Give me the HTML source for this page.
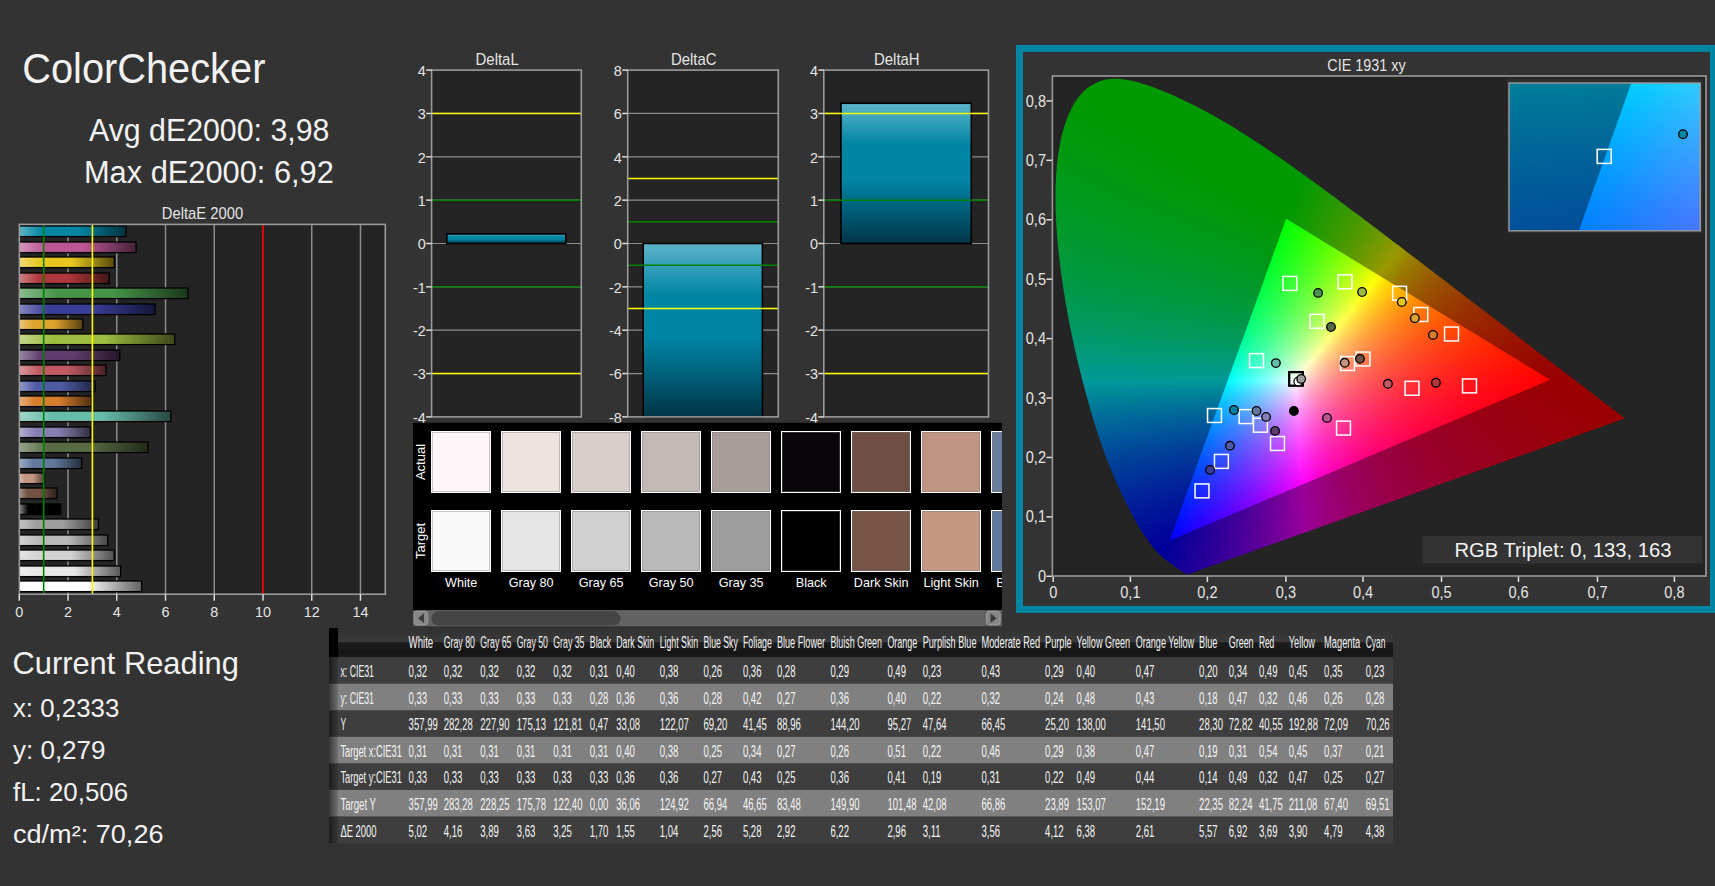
<!DOCTYPE html>
<html><head><meta charset="utf-8"><title>ColorChecker</title><style>html,body{margin:0;padding:0}body{width:1715px;height:886px;overflow:hidden;background:#333333;position:relative;font-family:"Liberation Sans",sans-serif}
.c{position:absolute;overflow:hidden}.c i{position:absolute;left:0;right:0;height:2px;display:block}
svg{position:absolute;left:0;top:0}svg text{font-family:"Liberation Sans",sans-serif}</style></head><body>
<div class="c" style="left:1052px;top:76px;width:654px;height:500px;background:#242424"></div>
<div class="c" style="left:1053px;top:76px;width:653px;height:500px;clip-path:polygon(135.59px 497.89px,134.9px 497.94px,134.44px 497.95px,134.05px 497.95px,133.72px 497.93px,133.42px 497.9px,133.16px 497.85px,132.93px 497.78px,132.72px 497.7px,132.54px 497.61px,132.38px 497.52px,132.24px 497.43px,132.11px 497.35px,131.98px 497.26px,131.82px 497.17px,131.65px 497.07px,131.46px 496.96px,131.26px 496.83px,131.04px 496.7px,130.8px 496.56px,130.56px 496.4px,130.3px 496.23px,130.03px 496.06px,129.75px 495.87px,129.46px 495.67px,129.16px 495.46px,128.85px 495.24px,128.54px 495.02px,128.21px 494.79px,127.87px 494.55px,127.51px 494.3px,127.14px 494.04px,126.75px 493.78px,126.34px 493.5px,125.91px 493.21px,125.45px 492.9px,124.96px 492.58px,124.44px 492.23px,123.9px 491.87px,123.33px 491.49px,122.73px 491.09px,122.11px 490.68px,121.47px 490.25px,120.81px 489.81px,120.12px 489.35px,119.41px 488.87px,118.67px 488.37px,117.9px 487.83px,117.1px 487.26px,116.27px 486.66px,115.4px 486.01px,114.5px 485.33px,113.57px 484.61px,112.61px 483.86px,111.64px 483.07px,110.63px 482.24px,109.6px 481.36px,108.52px 480.4px,107.4px 479.36px,106.22px 478.21px,104.98px 476.94px,103.67px 475.53px,102.29px 473.98px,100.83px 472.27px,99.32px 470.42px,97.73px 468.4px,96.08px 466.22px,94.37px 463.87px,92.59px 461.33px,90.75px 458.58px,88.83px 455.6px,86.85px 452.38px,84.78px 448.88px,82.65px 445.11px,80.43px 441.04px,78.11px 436.65px,75.7px 431.94px,73.18px 426.89px,70.55px 421.5px,67.81px 415.74px,64.96px 409.6px,62.03px 403.06px,59.04px 396.11px,56.02px 388.74px,52.98px 380.94px,49.95px 372.68px,46.92px 363.97px,43.9px 354.81px,40.89px 345.21px,37.88px 335.18px,34.88px 324.7px,31.88px 313.8px,28.92px 302.52px,26.01px 290.9px,23.18px 279px,20.46px 266.86px,17.86px 254.53px,15.41px 242.07px,13.13px 229.53px,11.03px 216.96px,9.13px 204.41px,7.44px 191.93px,5.97px 179.59px,4.74px 167.42px,3.76px 155.45px,3.05px 143.72px,2.62px 132.24px,2.47px 121.04px,2.63px 110.15px,3.1px 99.6px,3.9px 89.41px,5.02px 79.64px,6.48px 70.31px,8.27px 61.48px,10.42px 53.16px,12.91px 45.42px,15.73px 38.26px,18.87px 31.73px,22.3px 25.84px,26.01px 20.62px,29.98px 16.09px,34.18px 12.28px,38.6px 9.16px,43.2px 6.71px,47.96px 4.87px,52.85px 3.62px,57.84px 2.92px,62.92px 2.73px,68.06px 3px,73.25px 3.66px,78.49px 4.66px,83.76px 5.95px,89.05px 7.48px,94.35px 9.18px,99.66px 11.05px,104.94px 13.04px,110.2px 15.15px,115.41px 17.34px,120.57px 19.6px,125.66px 21.9px,130.68px 24.24px,135.64px 26.63px,140.56px 29.07px,145.43px 31.56px,150.27px 34.09px,155.07px 36.68px,159.85px 39.32px,164.61px 42.01px,169.35px 44.75px,174.08px 47.54px,178.8px 50.37px,183.5px 53.25px,188.21px 56.18px,192.9px 59.14px,197.58px 62.15px,202.26px 65.19px,206.93px 68.26px,211.58px 71.37px,216.22px 74.51px,220.86px 77.68px,225.49px 80.87px,230.12px 84.09px,234.74px 87.34px,239.36px 90.6px,243.98px 93.89px,248.59px 97.2px,253.22px 100.53px,257.84px 103.88px,262.47px 107.24px,267.1px 110.62px,271.74px 114.02px,276.37px 117.43px,281.01px 120.86px,285.64px 124.3px,290.27px 127.74px,294.89px 131.2px,299.5px 134.66px,304.11px 138.12px,308.72px 141.59px,313.32px 145.06px,317.92px 148.54px,322.52px 152.01px,327.11px 155.48px,331.7px 158.95px,336.28px 162.41px,340.85px 165.88px,345.41px 169.33px,349.94px 172.78px,354.46px 176.22px,358.97px 179.66px,363.45px 183.08px,367.91px 186.49px,372.35px 189.89px,376.77px 193.27px,381.17px 196.63px,385.55px 199.98px,389.9px 203.31px,394.23px 206.62px,398.52px 209.91px,402.79px 213.17px,407.02px 216.41px,411.22px 219.63px,415.38px 222.81px,419.51px 225.97px,423.6px 229.09px,427.65px 232.18px,431.66px 235.23px,435.62px 238.25px,439.53px 241.23px,443.4px 244.17px,447.21px 247.09px,450.96px 249.96px,454.66px 252.8px,458.29px 255.58px,461.85px 258.31px,465.32px 260.99px,468.72px 263.59px,472.02px 266.12px,475.24px 268.58px,478.39px 270.99px,481.46px 273.33px,484.47px 275.63px,487.43px 277.89px,490.33px 280.11px,493.18px 282.28px,495.97px 284.41px,498.69px 286.49px,501.33px 288.51px,503.89px 290.46px,506.37px 292.34px,508.76px 294.15px,511.07px 295.91px,513.31px 297.6px,515.47px 299.24px,517.56px 300.83px,519.58px 302.37px,521.53px 303.86px,523.41px 305.3px,525.23px 306.7px,526.98px 308.05px,528.66px 309.35px,530.28px 310.6px,531.84px 311.79px,533.34px 312.95px,534.79px 314.05px,536.18px 315.12px,537.51px 316.14px,538.8px 317.12px,540.05px 318.06px,541.24px 318.97px,542.4px 319.84px,543.51px 320.69px,544.58px 321.5px,545.61px 322.29px,546.6px 323.04px,547.56px 323.78px,548.48px 324.49px,549.38px 325.18px,550.25px 325.85px,551.1px 326.5px,551.92px 327.13px,552.72px 327.75px,553.5px 328.35px,554.26px 328.92px,554.99px 329.49px,555.69px 330.03px,556.37px 330.55px,557.03px 331.06px,557.66px 331.54px,558.28px 332.01px,558.87px 332.46px,559.44px 332.89px,559.99px 333.3px,560.51px 333.7px,561.02px 334.07px,561.51px 334.44px,561.97px 334.78px,562.41px 335.12px,562.83px 335.44px,563.22px 335.74px,563.6px 336.03px,563.96px 336.31px,564.31px 336.58px,564.64px 336.83px,564.95px 337.07px,565.25px 337.31px,565.55px 337.53px,565.82px 337.74px,566.09px 337.94px,566.34px 338.14px,566.59px 338.32px,566.81px 338.5px,567.03px 338.66px,567.23px 338.82px,567.41px 338.96px,567.58px 339.09px,567.73px 339.21px,567.88px 339.32px,568.01px 339.42px,568.14px 339.52px,568.26px 339.61px,568.39px 339.71px,568.51px 339.8px,568.63px 339.89px,568.75px 339.98px,568.86px 340.07px,568.96px 340.15px,569.06px 340.23px,569.16px 340.3px,569.25px 340.37px,569.33px 340.43px,569.42px 340.5px,569.51px 340.57px,569.6px 340.64px,569.69px 340.71px,569.78px 340.78px,569.87px 340.85px,569.96px 340.92px,570.05px 340.98px,570.14px 341.05px,570.22px 341.11px,570.3px 341.18px,570.38px 341.23px,570.45px 341.29px,570.52px 341.34px,570.58px 341.39px,570.64px 341.43px,570.69px 341.48px,570.74px 341.51px,570.79px 341.55px,570.83px 341.58px,570.86px 341.61px,570.89px 341.63px,570.92px 341.65px,570.94px 341.67px,570.96px 341.68px,570.98px 341.7px,571px 341.71px,571.01px 341.72px,571.02px 341.73px,571.04px 341.74px,571.05px 341.75px,570.9px 342.8px)">
<i style="top:2px;background:linear-gradient(90deg,#090 49px,#090 78px)"></i>
<i style="top:4px;background:linear-gradient(90deg,#090 43px,#090 86px)"></i>
<i style="top:6px;background:linear-gradient(90deg,#090 38px,#090 93px)"></i>
<i style="top:8px;background:linear-gradient(90deg,#090 35px,#090 99px)"></i>
<i style="top:10px;background:linear-gradient(90deg,#090 32px,#090 105px)"></i>
<i style="top:12px;background:linear-gradient(90deg,#090 30px,#090 110px)"></i>
<i style="top:14px;background:linear-gradient(90deg,#090 28px,#090 115px)"></i>
<i style="top:16px;background:linear-gradient(90deg,#090 26px,#090 119px)"></i>
<i style="top:18px;background:linear-gradient(90deg,#009901 24px,#090 124px)"></i>
<i style="top:20px;background:linear-gradient(90deg,#009901 23px,#090 119px,#090 128px)"></i>
<i style="top:22px;background:linear-gradient(90deg,#009902 21px,#090 59px,#090 133px)"></i>
<i style="top:24px;background:linear-gradient(90deg,#009903 20px,#090 56px,#090 137px)"></i>
<i style="top:26px;background:linear-gradient(90deg,#009903 19px,#090 57px,#090 141px)"></i>
<i style="top:28px;background:linear-gradient(90deg,#009904 17px,#090 59px,#090 145px)"></i>
<i style="top:30px;background:linear-gradient(90deg,#009905 16px,#090 62px,#090 149px)"></i>
<i style="top:32px;background:linear-gradient(90deg,#009905 15px,#090 64px,#090 153px)"></i>
<i style="top:34px;background:linear-gradient(90deg,#009906 14px,#090 67px,#090 156px)"></i>
<i style="top:36px;background:linear-gradient(90deg,#009906 13px,#090 70px,#090 160px)"></i>
<i style="top:38px;background:linear-gradient(90deg,#009907 13px,#090 73px,#090 164px)"></i>
<i style="top:40px;background:linear-gradient(90deg,#009907 12px,#090 76px,#090 167px)"></i>
<i style="top:42px;background:linear-gradient(90deg,#009908 11px,#090 79px,#090 171px)"></i>
<i style="top:44px;background:linear-gradient(90deg,#009909 10px,#090 82px,#090 174px)"></i>
<i style="top:46px;background:linear-gradient(90deg,#009909 10px,#090 85px,#090 177px)"></i>
<i style="top:48px;background:linear-gradient(90deg,#00990a 9px,#090 89px,#090 181px)"></i>
<i style="top:50px;background:linear-gradient(90deg,#00990a 8px,#090 92px,#090 184px)"></i>
<i style="top:52px;background:linear-gradient(90deg,#00990b 8px,#090 95px,#090 187px)"></i>
<i style="top:54px;background:linear-gradient(90deg,#00990c 7px,#090 98px,#090 190px)"></i>
<i style="top:56px;background:linear-gradient(90deg,#00990c 7px,#090 101px,#090 194px)"></i>
<i style="top:58px;background:linear-gradient(90deg,#00990d 6px,#090 105px,#090 197px)"></i>
<i style="top:60px;background:linear-gradient(90deg,#00990d 6px,#090 108px,#090 200px)"></i>
<i style="top:62px;background:linear-gradient(90deg,#00990e 5px,#090 111px,#090 203px)"></i>
<i style="top:64px;background:linear-gradient(90deg,#00990e 5px,#090 114px,#090 206px)"></i>
<i style="top:66px;background:linear-gradient(90deg,#00990f 4px,#090 117px,#090 209px)"></i>
<i style="top:68px;background:linear-gradient(90deg,#009910 4px,#090 120px,#090 212px)"></i>
<i style="top:70px;background:linear-gradient(90deg,#009910 4px,#090 124px,#090 215px)"></i>
<i style="top:72px;background:linear-gradient(90deg,#091 3px,#090 127px,#090 218px)"></i>
<i style="top:74px;background:linear-gradient(90deg,#091 3px,#090 130px,#090 221px)"></i>
<i style="top:76px;background:linear-gradient(90deg,#009912 3px,#090 133px,#090 224px)"></i>
<i style="top:78px;background:linear-gradient(90deg,#009913 2px,#090 137px,#090 227px)"></i>
<i style="top:80px;background:linear-gradient(90deg,#009913 2px,#090 140px,#090 230px)"></i>
<i style="top:82px;background:linear-gradient(90deg,#009914 2px,#090 143px,#090 232px)"></i>
<i style="top:84px;background:linear-gradient(90deg,#009914 2px,#090 146px,#090 235px)"></i>
<i style="top:86px;background:linear-gradient(90deg,#009915 2px,#090 150px,#090 238px)"></i>
<i style="top:88px;background:linear-gradient(90deg,#009916 1px,#090 153px,#090 241px)"></i>
<i style="top:90px;background:linear-gradient(90deg,#009916 1px,#090 156px,#090 244px)"></i>
<i style="top:92px;background:linear-gradient(90deg,#009917 1px,#090 159px,#090 247px)"></i>
<i style="top:94px;background:linear-gradient(90deg,#009918 1px,#090 163px,#090 249px)"></i>
<i style="top:96px;background:linear-gradient(90deg,#009918 1px,#090 166px,#019900 251px,#029900 252px)"></i>
<i style="top:98px;background:linear-gradient(90deg,#009919 1px,#090 169px,#019900 250px,#059900 255px)"></i>
<i style="top:100px;background:linear-gradient(90deg,#00991a 0,#090 172px,#019900 249px,#089900 258px)"></i>
<i style="top:102px;background:linear-gradient(90deg,#00991a 0,#009901 165px,#019900 249px,#0b9900 261px)"></i>
<i style="top:104px;background:linear-gradient(90deg,#00991b 0,#009901 165px,#019900 248px,#0d9900 263px)"></i>
<i style="top:106px;background:linear-gradient(90deg,#00991b 0,#009902 164px,#090 192px,#019900 247px,#109900 266px)"></i>
<i style="top:108px;background:linear-gradient(90deg,#00991c 0,#009903 164px,#090 189px,#090 246px,#139900 269px)"></i>
<i style="top:110px;background:linear-gradient(90deg,#00991d 0,#009903 163px,#090 190px,#019900 246px,#169900 271px)"></i>
<i style="top:112px;background:linear-gradient(90deg,#00991d 0,#009904 163px,#090 193px,#019900 245px,#199900 274px)"></i>
<i style="top:114px;background:linear-gradient(90deg,#00991e 0,#009905 162px,#090 195px,#019900 244px,#1d9900 277px)"></i>
<i style="top:116px;background:linear-gradient(90deg,#00991f 0,#009906 162px,#090 198px,#019900 244px,#209900 280px)"></i>
<i style="top:118px;background:linear-gradient(90deg,#00991f 0,#009906 162px,#090 201px,#019900 243px,#239900 282px)"></i>
<i style="top:120px;background:linear-gradient(90deg,#009920 0,#009907 161px,#090 204px,#019900 242px,#279900 285px)"></i>
<i style="top:122px;background:linear-gradient(90deg,#009921 0,#009908 161px,#090 207px,#019900 241px,#2a9900 288px)"></i>
<i style="top:124px;background:linear-gradient(90deg,#092 0,#009909 160px,#090 210px,#019900 241px,#2d9900 290px)"></i>
<i style="top:126px;background:linear-gradient(90deg,#092 0,#009909 160px,#090 214px,#019900 240px,#319900 293px)"></i>
<i style="top:128px;background:linear-gradient(90deg,#009923 0,#00990a 160px,#090 217px,#019900 239px,#359900 296px)"></i>
<i style="top:130px;background:linear-gradient(90deg,#009924 0,#00990b 159px,#090 220px,#019900 239px,#369900 296px,#389900 298px)"></i>
<i style="top:132px;background:linear-gradient(90deg,#009925 0,#00990c 159px,#090 223px,#019900 238px,#369900 295px,#3d9900 301px)"></i>
<i style="top:134px;background:linear-gradient(90deg,#009925 0,#00990d 158px,#090 226px,#019900 237px,#369900 293px,#419900 304px)"></i>
<i style="top:136px;background:linear-gradient(90deg,#009926 0,#00990e 158px,#090 230px,#029900 237px,#379900 293px,#490 306px)"></i>
<i style="top:138px;background:linear-gradient(90deg,#009927 0,#00990e 158px,#090 233px,#0d9900 249px,#429900 303px,#499900 309px)"></i>
<i style="top:140px;background:linear-gradient(90deg,#009928 0,#00990f 157px,#019900 235px,#369900 290px,#4e9900 312px)"></i>
<i style="top:142px;background:linear-gradient(90deg,#009928 0,#009910 157px,#019900 234px,#369900 289px,#519900 314px)"></i>
<i style="top:144px;background:linear-gradient(90deg,#009929 1px,#091 157px,#019901 233px,#369900 288px,#569900 317px)"></i>
<i style="top:146px;background:linear-gradient(90deg,#00992a 1px,#009912 157px,#019902 233px,#189900 257px,#4d9900 308px,#5b9900 320px)"></i>
<i style="top:148px;background:linear-gradient(90deg,#00992b 1px,#009913 156px,#019903 232px,#149900 252px,#499900 303px,#5f9900 322px)"></i>
<i style="top:150px;background:linear-gradient(90deg,#00992b 1px,#009914 156px,#019904 231px,#169900 254px,#4d9900 305px,#659900 325px)"></i>
<i style="top:152px;background:linear-gradient(90deg,#00992c 1px,#009914 156px,#009905 230px,#199900 256px,#4f9900 306px,#6a9900 328px)"></i>
<i style="top:154px;background:linear-gradient(90deg,#00992d 1px,#009915 155px,#019906 230px,#1d9900 259px,#539900 308px,#6e9900 330px)"></i>
<i style="top:156px;background:linear-gradient(90deg,#00992e 1px,#009916 155px,#019907 229px,#219900 262px,#579900 310px,#749900 333px)"></i>
<i style="top:158px;background:linear-gradient(90deg,#00992f 1px,#009917 155px,#019908 228px,#259900 265px,#5c9900 313px,#7a9900 336px)"></i>
<i style="top:160px;background:linear-gradient(90deg,#009930 2px,#009918 155px,#009909 227px,#299900 268px,#609900 315px,#7f9900 338px)"></i>
<i style="top:162px;background:linear-gradient(90deg,#009930 2px,#009919 155px,#01990a 227px,#2e9900 271px,#659900 317px,#859900 341px)"></i>
<i style="top:164px;background:linear-gradient(90deg,#009931 2px,#00991a 155px,#01990b 226px,#390 275px,#6a9900 320px,#8c9900 344px)"></i>
<i style="top:166px;background:linear-gradient(90deg,#009932 2px,#00991b 154px,#01990c 225px,#389900 278px,#6f9900 322px,#919900 346px)"></i>
<i style="top:168px;background:linear-gradient(90deg,#093 2px,#00991c 154px,#00990d 224px,#3d9900 281px,#739900 324px,#989900 349px)"></i>
<i style="top:170px;background:linear-gradient(90deg,#009934 3px,#00991d 154px,#01990e 224px,#429900 284px,#7a9900 327px,#990 348px,#999500 351px)"></i>
<i style="top:172px;background:linear-gradient(90deg,#009935 3px,#00991e 154px,#019910 223px,#479900 287px,#7f9900 329px,#999800 347px,#998e00 354px)"></i>
<i style="top:174px;background:linear-gradient(90deg,#009936 3px,#00991f 154px,#091 222px,#4c9900 290px,#849900 331px,#990 345px,#980 357px)"></i>
<i style="top:176px;background:linear-gradient(90deg,#009937 3px,#009920 154px,#019912 222px,#519900 293px,#899900 333px,#999800 344px,#998300 359px)"></i>
<i style="top:178px;background:linear-gradient(90deg,#009938 3px,#009921 153px,#019913 221px,#579900 296px,#8e9900 335px,#990 342px,#997d00 362px)"></i>
<i style="top:180px;background:linear-gradient(90deg,#009938 4px,#092 154px,#019914 220px,#5c9900 299px,#959900 338px,#999800 341px,#997b00 362px,#997800 365px)"></i>
<i style="top:182px;background:linear-gradient(90deg,#009939 4px,#009923 153px,#009916 219px,#619900 301px,#999800 339px,#997c00 360px,#997400 367px)"></i>
<i style="top:184px;background:linear-gradient(90deg,#00993a 4px,#009924 153px,#019917 219px,#679900 304px,#990 337px,#997c00 358px,#996f00 370px)"></i>
<i style="top:186px;background:linear-gradient(90deg,#00993b 4px,#009925 153px,#019918 218px,#6d9900 307px,#999800 336px,#997b00 357px,#996b00 372px)"></i>
<i style="top:188px;background:linear-gradient(90deg,#00993c 4px,#009926 153px,#019919 217px,#749900 310px,#990 334px,#997d00 354px,#996700 375px)"></i>
<i style="top:190px;background:linear-gradient(90deg,#00993d 5px,#009928 153px,#00991b 216px,#799900 312px,#999800 333px,#997c00 353px,#996200 378px)"></i>
<i style="top:192px;background:linear-gradient(90deg,#00993e 5px,#009929 153px,#01991c 216px,#819900 316px,#990 331px,#997c00 351px,#996200 377px,#995f00 380px)"></i>
<i style="top:194px;background:linear-gradient(90deg,#00993f 5px,#00992a 153px,#01991d 215px,#890 319px,#990 329px,#997b00 350px,#996100 376px,#995b00 383px)"></i>
<i style="top:196px;background:linear-gradient(90deg,#009941 5px,#00992b 153px,#00991f 214px,#61990a 288px,#909900 322px,#999800 328px,#997c00 348px,#996100 374px,#995800 385px)"></i>
<i style="top:198px;background:linear-gradient(90deg,#009942 6px,#00992c 153px,#009920 213px,#359915 253px,#969900 324px,#999700 327px,#997b00 347px,#996000 373px,#995400 388px)"></i>
<i style="top:200px;background:linear-gradient(90deg,#009943 6px,#00992d 153px,#019921 213px,#999801 325px,#997b00 345px,#996000 371px,#995100 391px)"></i>
<i style="top:202px;background:linear-gradient(90deg,#094 6px,#00992f 153px,#019923 212px,#999001 328px,#997400 349px,#995a00 376px,#994e00 393px)"></i>
<i style="top:204px;background:linear-gradient(90deg,#009945 7px,#009930 154px,#009924 211px,#998901 331px,#996e00 353px,#995400 382px,#994b00 396px)"></i>
<i style="top:206px;background:linear-gradient(90deg,#009946 7px,#009931 154px,#019926 211px,#998101 335px,#996700 358px,#994e00 389px,#994800 399px)"></i>
<i style="top:208px;background:linear-gradient(90deg,#009947 7px,#009932 153px,#019927 210px,#997a01 339px,#995f00 364px,#994700 397px,#994500 401px)"></i>
<i style="top:210px;background:linear-gradient(90deg,#009948 7px,#009934 153px,#019929 209px,#27911f 242px,#997401 342px,#995a00 368px,#994300 403px,#994200 404px)"></i>
<i style="top:212px;background:linear-gradient(90deg,#009949 8px,#009935 154px,#00992a 208px,#179425 228px,#996f01 345px,#950 373px,#994000 406px)"></i>
<i style="top:214px;background:linear-gradient(90deg,#00994b 8px,#009936 154px,#01992c 208px,#1f9124 235px,#996801 349px,#995000 378px,#993d00 409px)"></i>
<i style="top:216px;background:linear-gradient(90deg,#00994c 8px,#009938 154px,#01992d 207px,#159328 226px,#996301 352px,#994b00 383px,#993a00 412px)"></i>
<i style="top:218px;background:linear-gradient(90deg,#00994d 9px,#009939 155px,#00992f 206px,#0d962c 218px,#995f01 355px,#994700 387px,#993800 414px)"></i>
<i style="top:220px;background:linear-gradient(90deg,#00994e 9px,#00993a 155px,#009931 205px,#0c962e 216px,#995a01 359px,#994200 393px,#993600 417px)"></i>
<i style="top:222px;background:linear-gradient(90deg,#00994f 9px,#00993c 155px,#019932 205px,#0e952f 217px,#995501 362px,#993e00 397px,#993400 419px)"></i>
<i style="top:224px;background:linear-gradient(90deg,#009951 10px,#00993d 156px,#019934 204px,#0b9731 214px,#995101 365px,#993b00 402px,#993100 422px)"></i>
<i style="top:226px;background:linear-gradient(90deg,#009952 10px,#00993e 156px,#009936 203px,#0b9733 213px,#994e01 368px,#993700 406px,#992f00 425px)"></i>
<i style="top:228px;background:linear-gradient(90deg,#009953 10px,#009940 156px,#009937 202px,#0a9735 211px,#994901 372px,#993400 412px,#992d00 427px)"></i>
<i style="top:230px;background:linear-gradient(90deg,#095 11px,#009941 157px,#019939 202px,#0b9636 212px,#994601 375px,#993000 417px,#992b00 430px)"></i>
<i style="top:232px;background:linear-gradient(90deg,#009956 11px,#009943 157px,#01993b 201px,#0a9739 210px,#994301 378px,#992d00 422px,#992900 433px)"></i>
<i style="top:234px;background:linear-gradient(90deg,#009957 11px,#009945 157px,#00993d 200px,#0a973a 209px,#993f01 382px,#992a00 428px,#992800 435px)"></i>
<i style="top:236px;background:linear-gradient(90deg,#009959 12px,#009946 158px,#01993f 200px,#0a963c 209px,#993c01 385px,#992700 433px,#992600 438px)"></i>
<i style="top:238px;background:linear-gradient(90deg,#00995a 12px,#009948 158px,#019941 199px,#0a963e 208px,#993901 388px,#992500 437px,#992400 440px)"></i>
<i style="top:240px;background:linear-gradient(90deg,#00995b 13px,#009949 159px,#009942 198px,#0a9740 207px,#993601 391px,#920 442px,#920 443px)"></i>
<i style="top:242px;background:linear-gradient(90deg,#00995d 13px,#00994b 160px,#009945 197px,#0a9742 206px,#993301 395px,#992000 446px)"></i>
<i style="top:244px;background:linear-gradient(90deg,#00995e 13px,#00994d 160px,#019946 197px,#099744 205px,#993101 398px,#991f00 448px)"></i>
<i style="top:246px;background:linear-gradient(90deg,#009960 14px,#00994e 161px,#019948 196px,#0a9746 204px,#992e01 401px,#991d00 451px)"></i>
<i style="top:248px;background:linear-gradient(90deg,#009961 14px,#009950 162px,#00994b 195px,#099749 203px,#992c00 405px,#991c00 454px)"></i>
<i style="top:250px;background:linear-gradient(90deg,#009963 14px,#009952 162px,#00994d 194px,#09974b 202px,#992901 408px,#991a00 456px)"></i>
<i style="top:252px;background:linear-gradient(90deg,#009964 15px,#009954 164px,#01994f 194px,#08974d 201px,#992701 411px,#991900 459px)"></i>
<i style="top:254px;background:linear-gradient(90deg,#096 15px,#095 165px,#019951 193px,#09984f 200px,#992501 414px,#991700 461px)"></i>
<i style="top:256px;background:linear-gradient(90deg,#009968 16px,#009957 166px,#009953 192px,#089852 199px,#992300 418px,#991600 464px)"></i>
<i style="top:258px;background:linear-gradient(90deg,#009969 16px,#009959 167px,#019956 192px,#089854 198px,#992101 421px,#991400 467px)"></i>
<i style="top:260px;background:linear-gradient(90deg,#00996b 17px,#00995b 169px,#019958 191px,#099856 198px,#991f01 424px,#991300 469px)"></i>
<i style="top:262px;background:linear-gradient(90deg,#00996d 17px,#00995d 170px,#00995a 190px,#099859 197px,#991d00 428px,#991200 472px)"></i>
<i style="top:264px;background:linear-gradient(90deg,#00996e 17px,#00995f 171px,#00995d 189px,#09985b 196px,#991b00 431px,#910 474px)"></i>
<i style="top:266px;background:linear-gradient(90deg,#009970 18px,#009961 173px,#01995f 189px,#08985e 195px,#991900 434px,#990f00 477px)"></i>
<i style="top:268px;background:linear-gradient(90deg,#009972 18px,#009963 175px,#019962 188px,#099861 194px,#991700 438px,#990e00 480px)"></i>
<i style="top:270px;background:linear-gradient(90deg,#009974 19px,#096 177px,#009964 187px,#089863 193px,#991500 442px,#990d00 482px)"></i>
<i style="top:272px;background:linear-gradient(90deg,#009976 19px,#009968 179px,#009967 186px,#089866 192px,#991400 445px,#990c00 485px)"></i>
<i style="top:274px;background:linear-gradient(90deg,#009978 20px,#00996a 182px,#01996a 186px,#089869 191px,#991200 448px,#990b00 487px)"></i>
<i style="top:276px;background:linear-gradient(90deg,#00997a 20px,#01996c 185px,#09986b 191px,#910 452px,#990a00 490px)"></i>
<i style="top:278px;background:linear-gradient(90deg,#00997c 20px,#00996f 184px,#08986e 190px,#990f00 455px,#990800 493px)"></i>
<i style="top:280px;background:linear-gradient(90deg,#00997e 21px,#009972 183px,#089871 189px,#990e00 458px,#990700 495px)"></i>
<i style="top:282px;background:linear-gradient(90deg,#009980 21px,#019975 183px,#099874 189px,#990d00 461px,#990600 498px)"></i>
<i style="top:284px;background:linear-gradient(90deg,#009982 22px,#019978 182px,#099877 188px,#990b00 465px,#990500 501px)"></i>
<i style="top:286px;background:linear-gradient(90deg,#009984 22px,#00997b 181px,#09987a 187px,#990a00 468px,#990400 503px)"></i>
<i style="top:288px;background:linear-gradient(90deg,#009986 23px,#00997e 180px,#08987d 186px,#990900 471px,#990300 506px)"></i>
<i style="top:290px;background:linear-gradient(90deg,#098 23px,#019981 180px,#0a9881 186px,#990700 474px,#990200 508px)"></i>
<i style="top:292px;background:linear-gradient(90deg,#00998b 24px,#009985 179px,#099884 185px,#990600 478px,#990100 511px)"></i>
<i style="top:294px;background:linear-gradient(90deg,#00998d 24px,#098 178px,#099987 184px,#990500 481px,#900 514px)"></i>
<i style="top:296px;background:linear-gradient(90deg,#00998f 25px,#01998b 178px,#08998b 183px,#990400 484px,#900 516px)"></i>
<i style="top:298px;background:linear-gradient(90deg,#009992 25px,#01998f 177px,#0a998e 183px,#990300 488px,#900 519px)"></i>
<i style="top:300px;background:linear-gradient(90deg,#009994 26px,#009993 176px,#099992 182px,#990200 491px,#900 522px)"></i>
<i style="top:302px;background:linear-gradient(90deg,#009997 26px,#009996 175px,#099996 181px,#990100 494px,#900 524px)"></i>
<i style="top:304px;background:linear-gradient(90deg,#099 27px,#019899 175px,#0a9799 181px,#990001 493px,#900 527px)"></i>
<i style="top:306px;background:linear-gradient(90deg,#009699 27px,#009499 174px,#0a9499 180px,#990002 488px,#900 528px,#900 529px)"></i>
<i style="top:308px;background:linear-gradient(90deg,#009499 28px,#009199 173px,#099099 179px,#990003 483px,#900 521px,#900 532px)"></i>
<i style="top:310px;background:linear-gradient(90deg,#009199 28px,#008d99 172px,#098c99 178px,#990004 479px,#900 522px,#900 535px)"></i>
<i style="top:312px;background:linear-gradient(90deg,#008f99 29px,#018a99 172px,#0a8999 178px,#990005 474px,#900 524px,#900 537px)"></i>
<i style="top:314px;background:linear-gradient(90deg,#008c99 29px,#008699 171px,#098598 177px,#990006 469px,#900 526px,#900 540px)"></i>
<i style="top:316px;background:linear-gradient(90deg,#008a99 30px,#008399 170px,#098298 176px,#990008 465px,#900 529px,#900 542px)"></i>
<i style="top:318px;background:linear-gradient(90deg,#008799 31px,#018099 170px,#0a7f98 176px,#990009 460px,#900 531px,#900 545px)"></i>
<i style="top:320px;background:linear-gradient(90deg,#008599 31px,#017c99 169px,#097c98 175px,#99000a 455px,#900 534px,#900 548px)"></i>
<i style="top:322px;background:linear-gradient(90deg,#008299 32px,#007999 168px,#097898 174px,#99000b 450px,#900 535px,#900 550px)"></i>
<i style="top:324px;background:linear-gradient(90deg,#008099 32px,#007699 167px,#087598 173px,#99000d 446px,#900 537px,#900 553px)"></i>
<i style="top:326px;background:linear-gradient(90deg,#007e99 33px,#017399 167px,#097298 173px,#99000e 441px,#900 537px,#900 556px)"></i>
<i style="top:328px;background:linear-gradient(90deg,#007b99 33px,#007099 166px,#096f98 172px,#990010 436px,#900 536px,#900 558px)"></i>
<i style="top:330px;background:linear-gradient(90deg,#007999 34px,#006e99 165px,#086d98 171px,#901 431px,#990002 527px,#900 561px)"></i>
<i style="top:332px;background:linear-gradient(90deg,#079 34px,#016b99 165px,#086a98 170px,#990012 427px,#990003 521px,#900 563px)"></i>
<i style="top:334px;background:linear-gradient(90deg,#007599 35px,#016899 164px,#096798 170px,#990014 422px,#990004 513px,#900 563px,#900 566px)"></i>
<i style="top:336px;background:linear-gradient(90deg,#007299 36px,#006599 163px,#086498 169px,#990016 417px,#990006 505px,#900 564px,#900 569px)"></i>
<i style="top:338px;background:linear-gradient(90deg,#007099 36px,#006399 162px,#086198 169px,#990017 412px,#990007 497px,#900 566px,#900 571px)"></i>
<i style="top:340px;background:linear-gradient(90deg,#006e99 37px,#016099 162px,#095f98 168px,#990019 407px,#990009 489px,#900 569px,#900 574px)"></i>
<i style="top:342px;background:linear-gradient(90deg,#006c99 37px,#005e99 161px,#095c98 168px,#99001b 402px,#99000a 481px,#900 570px,#900 574px)"></i>
<i style="top:344px;background:linear-gradient(90deg,#006a99 38px,#005b99 160px,#085a98 167px,#99001d 397px,#99000c 473px,#900 570px)"></i>
<i style="top:346px;background:linear-gradient(90deg,#006899 39px,#015999 160px,#085798 166px,#99001f 393px,#99000d 467px,#900 564px)"></i>
<i style="top:348px;background:linear-gradient(90deg,#069 39px,#015699 159px,#095598 166px,#990021 388px,#99000f 460px,#990001 559px)"></i>
<i style="top:350px;background:linear-gradient(90deg,#006499 40px,#005499 158px,#095398 165px,#990023 383px,#901 452px,#990002 553px)"></i>
<i style="top:352px;background:linear-gradient(90deg,#006299 41px,#005299 157px,#085098 164px,#990025 378px,#990013 444px,#990003 546px,#990003 548px)"></i>
<i style="top:354px;background:linear-gradient(90deg,#006099 41px,#015099 157px,#084e97 164px,#990027 374px,#990015 438px,#990005 536px,#990004 542px)"></i>
<i style="top:356px;background:linear-gradient(90deg,#005e99 42px,#014d99 156px,#094c98 163px,#990029 369px,#990017 431px,#990007 525px,#990005 536px)"></i>
<i style="top:358px;background:linear-gradient(90deg,#005c99 42px,#004b99 155px,#094997 163px,#99002c 364px,#990019 424px,#990008 514px,#990006 531px)"></i>
<i style="top:360px;background:linear-gradient(90deg,#005a99 43px,#014999 155px,#094797 163px,#99012e 359px,#99001b 416px,#99000b 502px,#990007 525px)"></i>
<i style="top:362px;background:linear-gradient(90deg,#005899 44px,#014799 154px,#0a4597 162px,#990031 355px,#99001d 411px,#99000c 494px,#990008 520px)"></i>
<i style="top:364px;background:linear-gradient(90deg,#005699 44px,#004599 153px,#0a4397 162px,#903 350px,#990020 404px,#99000e 483px,#99000a 514px)"></i>
<i style="top:366px;background:linear-gradient(90deg,#005499 45px,#004399 152px,#0a4197 161px,#990136 345px,#902 396px,#901 471px,#99000b 508px)"></i>
<i style="top:368px;background:linear-gradient(90deg,#005299 46px,#014199 152px,#0a3f96 161px,#990039 341px,#990024 391px,#990012 464px,#99000c 503px)"></i>
<i style="top:370px;background:linear-gradient(90deg,#005099 47px,#013f99 151px,#0a3d97 160px,#99003c 336px,#990027 384px,#990015 453px,#99000d 497px)"></i>
<i style="top:372px;background:linear-gradient(90deg,#004e99 47px,#003d99 150px,#0a3b97 159px,#99013f 331px,#99002a 377px,#990017 443px,#99000e 491px)"></i>
<i style="top:374px;background:linear-gradient(90deg,#004c99 48px,#013b99 150px,#0a3996 159px,#990143 326px,#99002d 370px,#99001a 433px,#990010 486px)"></i>
<i style="top:376px;background:linear-gradient(90deg,#004b99 49px,#013a99 149px,#0a3797 158px,#990046 322px,#990030 364px,#99001d 424px,#901 480px)"></i>
<i style="top:378px;background:linear-gradient(90deg,#004999 49px,#003899 148px,#0a3597 157px,#99014a 317px,#990034 357px,#990020 414px,#990012 475px)"></i>
<i style="top:380px;background:linear-gradient(90deg,#004799 50px,#003699 147px,#0b3397 157px,#99014d 312px,#990037 351px,#990023 405px,#990014 469px)"></i>
<i style="top:382px;background:linear-gradient(90deg,#004599 51px,#013499 147px,#0c3196 158px,#990152 307px,#99003b 344px,#990026 395px,#990015 463px)"></i>
<i style="top:384px;background:linear-gradient(90deg,#004399 52px,#013399 146px,#0b3097 156px,#905 303px,#99003e 338px,#990029 387px,#990017 457px,#990017 458px)"></i>
<i style="top:386px;background:linear-gradient(90deg,#004299 52px,#003199 145px,#0c2e96 156px,#99015a 298px,#990042 332px,#99002d 378px,#99001a 444px,#990018 452px)"></i>
<i style="top:388px;background:linear-gradient(90deg,#004099 53px,#012f99 145px,#112b95 160px,#99015f 293px,#990047 325px,#990031 369px,#99001d 431px,#99001a 447px)"></i>
<i style="top:390px;background:linear-gradient(90deg,#003e99 54px,#012e99 144px,#152893 163px,#990063 289px,#99004a 320px,#990034 362px,#990020 421px,#99001b 441px)"></i>
<i style="top:392px;background:linear-gradient(90deg,#003d99 55px,#002c99 143px,#112895 158px,#990168 284px,#990050 313px,#990039 352px,#990025 407px,#99001d 435px)"></i>
<i style="top:394px;background:linear-gradient(90deg,#003b99 56px,#002b99 142px,#162595 161px,#99016e 279px,#990054 307px,#99003d 344px,#990028 396px,#99001f 430px)"></i>
<i style="top:396px;background:linear-gradient(90deg,#003999 56px,#012999 142px,#990174 274px,#99005a 300px,#990043 335px,#99002d 383px,#990021 424px)"></i>
<i style="top:398px;background:linear-gradient(90deg,#003899 57px,#012799 141px,#99017b 269px,#990060 294px,#990048 327px,#990032 372px,#990023 418px)"></i>
<i style="top:400px;background:linear-gradient(90deg,#003699 58px,#002699 140px,#990181 264px,#990067 287px,#99004e 318px,#990037 360px,#990025 413px)"></i>
<i style="top:402px;background:linear-gradient(90deg,#003499 59px,#012499 140px,#990189 259px,#99006d 281px,#990054 310px,#99003d 349px,#990028 403px,#990027 407px)"></i>
<i style="top:404px;background:linear-gradient(90deg,#039 60px,#012399 139px,#990191 254px,#990074 275px,#99005a 302px,#990043 338px,#99002e 387px,#990029 402px)"></i>
<i style="top:406px;background:linear-gradient(90deg,#003199 61px,#012299 138px,#2c1899 171px,#990198 250px,#99007b 270px,#990061 295px,#990048 329px,#990032 375px,#99002b 396px)"></i>
<i style="top:408px;background:linear-gradient(90deg,#002f99 62px,#002099 137px,#341599 176px,#970099 248px,#990096 251px,#99007a 271px,#99005f 297px,#990048 331px,#990032 378px,#99002d 390px)"></i>
<i style="top:410px;background:linear-gradient(90deg,#002e99 63px,#011f99 137px,#8e0099 243px,#990098 250px,#99007b 270px,#990061 296px,#990049 330px,#990032 377px,#99002f 385px)"></i>
<i style="top:412px;background:linear-gradient(90deg,#002c99 64px,#011d99 136px,#870099 239px,#990098 250px,#99007c 270px,#990061 296px,#990049 330px,#903 377px,#990032 379px)"></i>
<i style="top:414px;background:linear-gradient(90deg,#002a99 65px,#001c99 135px,#810099 235px,#909 250px,#99007c 270px,#990061 296px,#990049 330px,#990034 374px)"></i>
<i style="top:416px;background:linear-gradient(90deg,#002999 65px,#011b99 135px,#790099 230px,#909 250px,#99007c 270px,#990062 296px,#99004a 330px,#990037 368px)"></i>
<i style="top:418px;background:linear-gradient(90deg,#002799 66px,#011999 134px,#730099 226px,#909 250px,#99007b 271px,#990061 297px,#990049 332px,#99003a 362px)"></i>
<i style="top:420px;background:linear-gradient(90deg,#002699 67px,#011899 133px,#6d0099 222px,#909 250px,#99007b 272px,#990060 299px,#990048 335px,#99003d 357px)"></i>
<i style="top:422px;background:linear-gradient(90deg,#002499 68px,#001799 132px,#609 217px,#990098 251px,#99007b 272px,#990061 299px,#990048 335px,#990040 351px)"></i>
<i style="top:424px;background:linear-gradient(90deg,#002399 69px,#011599 132px,#610099 213px,#990098 251px,#99007b 272px,#990061 299px,#990049 335px,#990043 345px)"></i>
<i style="top:426px;background:linear-gradient(90deg,#002199 70px,#011499 131px,#5c0099 209px,#950099 248px,#990097 252px,#99007a 273px,#990060 301px,#990047 338px,#990046 340px)"></i>
<i style="top:428px;background:linear-gradient(90deg,#002099 71px,#001399 130px,#570099 205px,#8f0099 244px,#990098 251px,#99007c 272px,#990062 299px,#99004a 334px)"></i>
<i style="top:430px;background:linear-gradient(90deg,#001e99 72px,#011299 130px,#500099 200px,#809 240px,#909 251px,#99007c 272px,#990062 299px,#99004d 329px)"></i>
<i style="top:432px;background:linear-gradient(90deg,#001d99 73px,#011199 129px,#4c0099 196px,#840099 237px,#909 251px,#99007d 272px,#990062 300px,#990051 323px)"></i>
<i style="top:434px;background:linear-gradient(90deg,#001b99 74px,#010f99 128px,#460099 191px,#7e0099 233px,#909 251px,#99007c 273px,#990061 301px,#990056 317px)"></i>
<i style="top:436px;background:linear-gradient(90deg,#001a99 75px,#000e99 127px,#410099 187px,#790099 230px,#909 251px,#99007b 274px,#990061 302px,#990059 312px)"></i>
<i style="top:438px;background:linear-gradient(90deg,#001899 76px,#010d99 127px,#3c0099 182px,#730099 225px,#990098 252px,#99007b 274px,#990061 302px,#99005e 306px)"></i>
<i style="top:440px;background:linear-gradient(90deg,#001799 77px,#010c99 126px,#360099 177px,#6d0099 221px,#990098 252px,#99007c 274px,#990062 301px)"></i>
<i style="top:442px;background:linear-gradient(90deg,#001599 78px,#000b99 125px,#320099 173px,#690099 218px,#990098 252px,#99007c 274px,#990068 295px)"></i>
<i style="top:444px;background:linear-gradient(90deg,#001499 80px,#010a99 125px,#2d0099 168px,#640099 214px,#990098 252px,#99007c 274px,#99006d 289px)"></i>
<i style="top:446px;background:linear-gradient(90deg,#001299 81px,#010999 124px,#280099 163px,#5f0099 210px,#909 252px,#99007c 274px,#990072 284px)"></i>
<i style="top:448px;background:linear-gradient(90deg,#019 82px,#010899 123px,#240099 159px,#5c0099 207px,#950099 249px,#990097 253px,#99007b 276px,#990078 278px)"></i>
<i style="top:450px;background:linear-gradient(90deg,#000f99 83px,#000799 122px,#200099 154px,#560099 202px,#8f0099 245px,#909 252px,#99007f 272px)"></i>
<i style="top:452px;background:linear-gradient(90deg,#000e99 84px,#010599 122px,#1c0099 150px,#520099 199px,#8a0099 242px,#990098 253px,#990085 267px)"></i>
<i style="top:454px;background:linear-gradient(90deg,#000d99 85px,#010599 121px,#190099 146px,#4f0099 196px,#870099 240px,#990098 253px,#99008d 261px)"></i>
<i style="top:456px;background:linear-gradient(90deg,#000b99 87px,#010499 120px,#150099 142px,#4c0099 193px,#830099 237px,#990098 253px,#990094 256px)"></i>
<i style="top:458px;background:linear-gradient(90deg,#000a99 88px,#010299 120px,#140099 140px,#4a0099 191px,#820099 236px,#950099 250px)"></i>
<i style="top:460px;background:linear-gradient(90deg,#000899 89px,#010199 119px,#210099 153px,#580099 203px,#8d0099 244px)"></i>
<i style="top:462px;background:linear-gradient(90deg,#000799 91px,#010199 118px,#350099 172px,#6d0099 220px,#860099 239px)"></i>
<i style="top:464px;background:linear-gradient(90deg,#000599 92px,#009 117px,#360099 172px,#6d0099 220px,#7e0099 233px)"></i>
<i style="top:466px;background:linear-gradient(90deg,#000499 93px,#010099 117px,#360099 172px,#6d0099 220px,#709 228px)"></i>
<i style="top:468px;background:linear-gradient(90deg,#000399 95px,#010099 116px,#350099 171px,#6d0099 220px,#700099 222px)"></i>
<i style="top:470px;background:linear-gradient(90deg,#000199 96px,#010099 115px,#360099 171px,#680099 216px)"></i>
<i style="top:472px;background:linear-gradient(90deg,#009 98px,#010099 115px,#360099 171px,#630099 211px)"></i>
<i style="top:474px;background:linear-gradient(90deg,#009 100px,#010099 114px,#360099 170px,#5c0099 205px)"></i>
<i style="top:476px;background:linear-gradient(90deg,#009 102px,#010099 113px,#360099 170px,#560099 200px)"></i>
<i style="top:478px;background:linear-gradient(90deg,#009 104px,#010099 113px,#360099 170px,#500099 194px)"></i>
<i style="top:480px;background:linear-gradient(90deg,#009 106px,#020099 113px,#370099 170px,#4a0099 188px)"></i>
<i style="top:482px;background:linear-gradient(90deg,#009 108px,#030099 114px,#380099 171px,#450099 183px)"></i>
<i style="top:484px;background:linear-gradient(90deg,#010099 110px,#360099 168px,#3f0099 177px)"></i>
<i style="top:486px;background:linear-gradient(90deg,#040099 113px,#390099 171px)"></i>
<i style="top:488px;background:linear-gradient(90deg,#070099 116px,#340099 166px)"></i>
<i style="top:490px;background:linear-gradient(90deg,#0a0099 119px,#2f0099 160px)"></i>
<i style="top:492px;background:linear-gradient(90deg,#0d0099 122px,#2b0099 155px)"></i>
<i style="top:494px;background:linear-gradient(90deg,#100099 125px,#250099 149px)"></i>
<i style="top:496px;background:linear-gradient(90deg,#120099 127px,#200099 143px)"></i>
</div>
<div class="c" style="left:1053px;top:76px;width:653px;height:500px;clip-path:polygon(497.16px 303.69px,233.15px 142.82px,116.67px 464.55px)">
<i style="top:142px;background:linear-gradient(90deg,#00ff01 230px,#01ff00 234px,#07ff00 238px)"></i>
<i style="top:144px;background:linear-gradient(90deg,#00ff03 229px,#01ff01 233px,#0dff00 241px)"></i>
<i style="top:146px;background:linear-gradient(90deg,#00ff04 229px,#02ff03 233px,#13ff00 244px)"></i>
<i style="top:148px;background:linear-gradient(90deg,#00ff06 228px,#02ff05 232px,#19ff00 247px)"></i>
<i style="top:150px;background:linear-gradient(90deg,#00ff08 227px,#01ff06 231px,#1fff00 250px,#20ff00 251px)"></i>
<i style="top:152px;background:linear-gradient(90deg,#00ff09 227px,#02ff08 231px,#25ff00 253px,#27ff00 254px)"></i>
<i style="top:154px;background:linear-gradient(90deg,#00ff0b 226px,#02ff09 230px,#2bff00 256px,#2dff00 257px)"></i>
<i style="top:156px;background:linear-gradient(90deg,#00ff0d 225px,#02ff0b 229px,#32ff00 259px,#35ff00 261px)"></i>
<i style="top:158px;background:linear-gradient(90deg,#00ff0f 224px,#01ff0d 228px,#3aff00 263px,#3cff00 264px)"></i>
<i style="top:160px;background:linear-gradient(90deg,#00ff10 224px,#02ff0f 228px,#41ff00 266px,#43ff00 267px)"></i>
<i style="top:162px;background:linear-gradient(90deg,#00ff12 223px,#02ff10 227px,#45ff00 267px,#4aff00 270px)"></i>
<i style="top:164px;background:linear-gradient(90deg,#00ff14 222px,#01ff12 226px,#45ff02 266px,#54ff00 274px)"></i>
<i style="top:166px;background:linear-gradient(90deg,#00ff15 222px,#01ff14 225px,#45ff04 265px,#5bff00 277px)"></i>
<i style="top:168px;background:linear-gradient(90deg,#00ff17 221px,#02ff16 225px,#45ff06 264px,#61ff00 279px,#63ff00 280px)"></i>
<i style="top:170px;background:linear-gradient(90deg,#00ff19 220px,#02ff18 224px,#45ff08 263px,#69ff00 282px,#6dff00 284px)"></i>
<i style="top:172px;background:linear-gradient(90deg,#00ff1b 219px,#01ff1a 223px,#45ff0a 262px,#72ff00 285px,#76ff00 287px)"></i>
<i style="top:174px;background:linear-gradient(90deg,#00ff1d 219px,#01ff1c 222px,#45ff0c 261px,#7aff00 288px,#7eff00 290px)"></i>
<i style="top:176px;background:linear-gradient(90deg,#00ff1f 218px,#02ff1e 222px,#45ff0e 260px,#85ff00 292px,#87ff00 293px)"></i>
<i style="top:178px;background:linear-gradient(90deg,#00ff21 217px,#02ff20 221px,#45ff10 259px,#8aff00 293px,#93ff00 297px)"></i>
<i style="top:180px;background:linear-gradient(90deg,#00ff23 216px,#01ff22 220px,#45ff12 258px,#8aff02 292px,#9cff00 300px)"></i>
<i style="top:182px;background:linear-gradient(90deg,#00ff25 216px,#02ff24 220px,#47ff14 258px,#8dff04 292px,#a4ff00 302px,#a6ff00 303px)"></i>
<i style="top:184px;background:linear-gradient(90deg,#00ff27 215px,#00ff26 218px,#43ff17 255px,#89ff07 289px,#aeff00 305px,#b3ff00 307px)"></i>
<i style="top:186px;background:linear-gradient(90deg,#00ff29 214px,#01ff28 218px,#45ff19 255px,#8aff09 288px,#b8ff00 308px,#bdff00 310px)"></i>
<i style="top:188px;background:linear-gradient(90deg,#00ff2b 214px,#01ff2a 217px,#45ff1b 254px,#8aff0c 287px,#c3ff00 311px,#c8ff00 313px)"></i>
<i style="top:190px;background:linear-gradient(90deg,#00ff2e 213px,#02ff2c 217px,#45ff1d 253px,#8bff0e 286px,#ceff00 314px,#d3ff00 316px)"></i>
<i style="top:192px;background:linear-gradient(90deg,#00ff30 212px,#00ff2f 215px,#43ff20 251px,#89ff11 284px,#d2ff01 314px,#e2ff00 320px)"></i>
<i style="top:194px;background:linear-gradient(90deg,#00ff32 211px,#01ff31 215px,#45ff22 251px,#8aff13 283px,#d0ff04 312px,#ebff00 322px,#ef0 323px)"></i>
<i style="top:196px;background:linear-gradient(90deg,#00ff34 211px,#01ff33 214px,#45ff24 250px,#8aff16 282px,#d2ff06 311px,#f5ff00 324px,#faff00 326px)"></i>
<i style="top:198px;background:linear-gradient(90deg,#00ff36 210px,#00ff35 213px,#45ff27 249px,#8bff18 281px,#d3ff09 310px,#ff0 326px,#fff700 329px)"></i>
<i style="top:200px;background:linear-gradient(90deg,#00ff39 209px,#00ff38 212px,#41ff2a 246px,#87ff1c 278px,#cfff0d 307px,#feff03 324px,#ffeb00 332px,#ffe800 333px)"></i>
<i style="top:202px;background:linear-gradient(90deg,#00ff3b 209px,#01ff3a 212px,#45ff2c 247px,#89ff1e 278px,#d3ff0f 307px,#ffff05 323px,#ffe200 334px,#fd0 336px)"></i>
<i style="top:204px;background:linear-gradient(90deg,#00ff3d 208px,#01ff3c 211px,#45ff2f 246px,#8aff20 277px,#d1ff12 305px,#feff09 321px,#ffd700 337px,#ffd200 339px)"></i>
<i style="top:206px;background:linear-gradient(90deg,#00ff40 207px,#00ff3f 210px,#43ff32 244px,#88ff24 275px,#d0ff15 303px,#fffe0b 320px,#ffda02 334px,#ffc600 343px)"></i>
<i style="top:208px;background:linear-gradient(90deg,#00ff43 206px,#01ff41 210px,#45ff34 244px,#8bff26 275px,#d4ff17 303px,#ffff0f 318px,#ffd805 333px,#ffc100 344px,#ffbd00 346px)"></i>
<i style="top:210px;background:linear-gradient(90deg,#00ff45 206px,#01ff44 209px,#45ff36 243px,#8cff29 274px,#d5ff1a 302px,#fdff12 316px,#fff810 319px,#ffd407 333px,#ffb800 347px,#ffb400 349px)"></i>
<i style="top:212px;background:linear-gradient(90deg,#00ff47 205px,#00ff46 208px,#45ff39 242px,#8aff2c 272px,#d1ff1e 299px,#ffff15 315px,#ffda0b 329px,#ffb601 346px,#ffac00 352px)"></i>
<i style="top:214px;background:linear-gradient(90deg,#00ff4a 204px,#00ff49 207px,#43ff3c 240px,#88ff2f 270px,#cfff22 297px,#feff19 313px,#ffd30c 330px,#ffb102 347px,#ffa200 356px)"></i>
<i style="top:216px;background:linear-gradient(90deg,#00ff4d 203px,#01ff4b 207px,#45ff3f 240px,#8bff32 270px,#d3ff24 297px,#fffe1c 312px,#ffd910 326px,#ffb506 343px,#ff9c00 358px,#ff9b00 359px)"></i>
<i style="top:218px;background:linear-gradient(90deg,#00ff4f 203px,#01ff4e 206px,#45ff42 239px,#8cff35 269px,#d4ff27 296px,#feff1f 310px,#ffd512 326px,#ffb208 343px,#ff9500 361px,#ff9400 362px)"></i>
<i style="top:220px;background:linear-gradient(90deg,#00ff52 202px,#00ff51 205px,#45ff45 238px,#8aff38 267px,#d3ff2b 294px,#fffe22 309px,#ffda17 322px,#ffb80c 338px,#ff9702 358px,#ff8c00 366px)"></i>
<i style="top:222px;background:linear-gradient(90deg,#0f5 201px,#00ff54 204px,#40ff48 235px,#85ff3c 264px,#ccff2f 290px,#ffff26 307px,#ffd81a 321px,#ffb60e 337px,#ff9503 357px,#ff8500 369px)"></i>
<i style="top:224px;background:linear-gradient(90deg,#00ff57 201px,#01ff56 204px,#45ff4b 236px,#8bff3e 265px,#d3ff32 291px,#fdff2a 305px,#fff727 308px,#ffd21b 322px,#ffaf0f 339px,#ff8e04 360px,#ff7f00 372px)"></i>
<i style="top:226px;background:linear-gradient(90deg,#00ff5a 200px,#01ff59 203px,#45ff4e 235px,#8cff41 264px,#d4ff35 290px,#ffff2d 304px,#ffda20 317px,#ffb714 333px,#ff9508 353px,#ff7b00 374px,#ff7900 375px)"></i>
<i style="top:228px;background:linear-gradient(90deg,#00ff5d 199px,#00ff5c 202px,#42ff51 233px,#87ff46 261px,#cfff39 287px,#feff31 302px,#ffd321 318px,#ffb115 334px,#ff9109 354px,#ff7500 377px,#ff7300 379px)"></i>
<i style="top:230px;background:linear-gradient(90deg,#00ff60 198px,#02ff5f 202px,#45ff54 233px,#8aff48 261px,#d1ff3d 286px,#fffe35 301px,#ffd927 314px,#ffb619 330px,#ff950d 349px,#ff7702 373px,#ff6d00 382px)"></i>
<i style="top:232px;background:linear-gradient(90deg,#00ff63 198px,#01ff62 201px,#45ff57 232px,#8bff4c 260px,#d2ff40 285px,#feff39 299px,#ffd528 314px,#ffb21b 330px,#ff910e 350px,#ff7202 375px,#ff6800 385px)"></i>
<i style="top:234px;background:linear-gradient(90deg,#0f6 197px,#00ff65 200px,#45ff5a 231px,#8bff4f 259px,#d3ff44 284px,#fffe3c 298px,#ffd82d 311px,#ffb620 326px,#ff9513 345px,#ff7606 369px,#ff6400 388px,#ff6300 389px)"></i>
<i style="top:236px;background:linear-gradient(90deg,#00ff6a 196px,#00ff69 199px,#42ff5e 229px,#87ff53 256px,#cfff48 281px,#ffff41 296px,#ffd931 309px,#ffb723 324px,#ff9515 343px,#ff7709 366px,#ff5f00 391px,#ff5e00 392px)"></i>
<i style="top:238px;background:linear-gradient(90deg,#00ff6d 195px,#01ff6c 199px,#45ff61 229px,#8aff57 256px,#d3ff4b 281px,#fdff45 294px,#fff741 297px,#ffd232 310px,#ffaf23 326px,#ff8f15 345px,#ff7209 369px,#ff5a00 394px,#ff5900 395px)"></i>
<i style="top:240px;background:linear-gradient(90deg,#00ff70 195px,#01ff6f 198px,#45ff65 228px,#8bff5a 255px,#d2ff4f 279px,#ffff49 293px,#ffdb39 305px,#ffb729 320px,#ff971b 338px,#ff780e 361px,#ff5c02 390px,#f50 398px)"></i>
<i style="top:242px;background:linear-gradient(90deg,#00ff73 194px,#00ff72 197px,#45ff68 227px,#8bff5e 254px,#d3ff53 278px,#feff4d 291px,#ffd339 306px,#ffb22a 321px,#ff911b 340px,#ff720e 364px,#ff5601 394px,#ff5000 402px)"></i>
<i style="top:244px;background:linear-gradient(90deg,#0f7 193px,#00ff76 196px,#3dff6d 223px,#84ff63 250px,#cbff59 274px,#fffe51 290px,#ffda40 302px,#ffb62f 317px,#ff9520 335px,#ff7612 358px,#ff5a05 387px,#ff4c00 405px)"></i>
<i style="top:246px;background:linear-gradient(90deg,#00ff7a 193px,#01ff79 196px,#45ff6f 225px,#8aff66 251px,#d3ff5c 275px,#feff55 288px,#ffd541 302px,#ffb231 317px,#ff9222 335px,#ff7413 358px,#ff5806 387px,#ff4800 408px)"></i>
<i style="top:248px;background:linear-gradient(90deg,#00ff7d 192px,#01ff7c 195px,#45ff73 224px,#8bff6a 250px,#d1ff60 273px,#fdff5a 286px,#fffa57 288px,#ffd646 300px,#ffb334 315px,#ff9225 333px,#ff7416 356px,#ff5808 385px,#ff4500 411px,#f40 412px)"></i>
<i style="top:250px;background:linear-gradient(90deg,#00ff81 191px,#00ff80 194px,#42ff77 222px,#88ff6e 248px,#cfff65 271px,#ffff5e 285px,#ffd94b 297px,#ffb73a 311px,#ff9629 329px,#ff771a 351px,#ff5a0c 379px,#ff4100 414px,#ff4100 415px)"></i>
<i style="top:252px;background:linear-gradient(90deg,#00ff84 190px,#00ff84 193px,#38ff7c 217px,#7dff73 243px,#c3ff6a 266px,#fdff63 283px,#fff65e 286px,#ffd24c 298px,#ffaf3a 313px,#ff8f29 331px,#ff7119 354px,#ff550b 383px,#ff3e00 417px,#ff3d00 418px)"></i>
<i style="top:254px;background:linear-gradient(90deg,#0f8 190px,#01ff87 193px,#45ff7f 221px,#8aff76 246px,#d2ff6d 269px,#ffff67 282px,#ffdb54 293px,#ffb842 307px,#ff9730 324px,#ff7920 345px,#ff5c11 372px,#ff4203 407px,#ff3a00 421px)"></i>
<i style="top:256px;background:linear-gradient(90deg,#00ff8c 189px,#00ff8b 192px,#45ff83 220px,#8aff7a 245px,#d4ff71 268px,#feff6c 280px,#ffd455 294px,#ffb242 308px,#ff9130 326px,#ff7320 348px,#ff5711 376px,#ff3d02 413px,#ff3600 425px)"></i>
<i style="top:258px;background:linear-gradient(90deg,#00ff90 188px,#00ff8f 191px,#3fff87 217px,#85ff7f 242px,#cbff77 264px,#fffe71 279px,#ffda5c 290px,#ffb648 304px,#ff9636 321px,#ff7725 342px,#ff5b15 369px,#ff4006 404px,#f30 428px)"></i>
<i style="top:260px;background:linear-gradient(90deg,#00ff93 188px,#01ff93 191px,#45ff8b 218px,#89ff83 242px,#d0ff7b 264px,#feff76 277px,#ffd860 289px,#ffb54b 303px,#ff9438 320px,#ff7627 341px,#ff5917 368px,#ff3f08 403px,#ff3000 431px)"></i>
<i style="top:262px;background:linear-gradient(90deg,#00ff97 187px,#01ff97 190px,#45ff8f 217px,#89ff88 241px,#d1ff80 263px,#fdff7b 275px,#fffa78 277px,#ffd663 288px,#ffb34e 302px,#ff923b 319px,#ff7429 340px,#ff5818 367px,#ff3e09 402px,#ff2d00 434px,#ff2d00 435px)"></i>
<i style="top:264px;background:linear-gradient(90deg,#00ff9b 186px,#00ff9b 189px,#45ff94 216px,#8aff8c 240px,#d3ff85 262px,#ffff80 274px,#ffda6a 285px,#ffb855 298px,#ff9741 314px,#ff792f 334px,#ff5c1d 360px,#ff420e 393px,#ff2b00 436px,#ff2a00 438px)"></i>
<i style="top:266px;background:linear-gradient(90deg,#00ffa0 185px,#00ff9f 188px,#3cff99 212px,#82ff92 236px,#caff8b 258px,#fdff86 272px,#fff27d 276px,#fc6 288px,#ffab51 302px,#ff8a3d 320px,#ff6c2a 342px,#ff5119 370px,#ff3809 407px,#ff2700 441px)"></i>
<i style="top:268px;background:linear-gradient(90deg,#00ffa4 185px,#01ffa3 188px,#45ff9c 214px,#89ff96 237px,#cfff8f 258px,#fffe8a 271px,#ffd972 282px,#ffb65c 295px,#ff9647 311px,#ff7734 331px,#ff5a22 357px,#ff4011 390px,#ff2902 434px,#ff2400 444px)"></i>
<i style="top:270px;background:linear-gradient(90deg,#00ffa8 184px,#01ffa7 187px,#45ffa1 213px,#89ff9b 236px,#d1ff94 257px,#feff90 269px,#ffd474 282px,#ffb25e 295px,#ff9249 311px,#ff7435 331px,#ff5823 357px,#ff3e12 391px,#ff2602 436px,#ff2100 448px)"></i>
<i style="top:272px;background:linear-gradient(90deg,#00ffac 183px,#00ffac 186px,#42ffa6 211px,#87ffa0 234px,#cfff9a 255px,#fffe95 268px,#ffd87b 279px,#ffb564 292px,#ff944e 308px,#ff7539 328px,#ff5a26 353px,#ff3f15 386px,#ff2805 430px,#ff1f00 451px)"></i>
<i style="top:274px;background:linear-gradient(90deg,#00ffb1 182px,#00ffb0 185px,#36ffac 206px,#7bffa6 229px,#c2ffa0 250px,#ffff9c 266px,#ffd981 277px,#ffb568 290px,#ff9452 306px,#ff753c 326px,#ff5929 351px,#ff3f17 384px,#ff2706 428px,#ff1d00 454px)"></i>
<i style="top:276px;background:linear-gradient(90deg,#00ffb5 182px,#01ffb5 185px,#44ffb0 210px,#8fa 232px,#ceffa5 252px,#fdffa1 264px,#fff99d 266px,#ffd382 277px,#ffb16a 290px,#ff9053 306px,#ff723e 326px,#ff5629 352px,#ff3c17 385px,#ff2507 430px,#ff1a00 458px)"></i>
<i style="top:278px;background:linear-gradient(90deg,#00ffba 181px,#00ffb9 184px,#44ffb5 209px,#89ffb0 231px,#d0ffab 251px,#ffffa7 263px,#ffdb8d 273px,#ffb874 285px,#ff985c 300px,#ff7946 319px,#ff5c31 343px,#ff421e 374px,#ff2a0c 415px,#ff1800 460px,#ff1800 461px)"></i>
<i style="top:280px;background:linear-gradient(90deg,#00ffbf 180px,#00ffbe 183px,#3fffba 206px,#83ffb5 228px,#caffb1 248px,#fdffad 261px,#fff1a3 265px,#ffcc87 276px,#ffaa6e 289px,#ff8b57 305px,#ff6e41 325px,#ff522c 351px,#ff3919 385px,#ff2108 431px,#ff1500 464px)"></i>
<i style="top:282px;background:linear-gradient(90deg,#00ffc3 180px,#02ffc3 183px,#44ffbf 207px,#8bffbb 229px,#d3ffb6 249px,#fffeb3 260px,#ffd997 270px,#ffb77c 282px,#ff9663 297px,#ff774b 316px,#ff5a35 340px,#ff4021 371px,#ff280f 412px,#ff1300 466px,#ff1300 467px)"></i>
<i style="top:284px;background:linear-gradient(90deg,#00ffc8 179px,#01ffc8 182px,#44ffc4 206px,#88ffc0 227px,#cdffbd 246px,#feffba 258px,#ffd498 270px,#ffb27e 282px,#ff9264 297px,#ff744d 316px,#ff5837 340px,#ff3e22 371px,#ff2610 413px,#f10 469px,#f10 471px)"></i>
<i style="top:286px;background:linear-gradient(90deg,#00ffce 178px,#00ffcd 181px,#44ffca 205px,#89ffc6 226px,#cfffc3 245px,#fcffc0 256px,#fffebf 257px,#ffd8a1 267px,#ffb585 279px,#ff946a 294px,#ff7652 312px,#ff5a3c 335px,#ff4027 365px,#ff2914 405px,#ff1302 460px,#ff0f00 474px)"></i>
<i style="top:288px;background:linear-gradient(90deg,#00ffd3 177px,#00ffd2 180px,#38ffd0 200px,#7cffcd 221px,#c1ffca 240px,#ffffc7 255px,#ffd9a8 265px,#ffb68a 277px,#ff9670 291px,#ff7757 309px,#ff5b3f 332px,#ff402a 362px,#ff2816 402px,#ff1304 456px,#ff0d00 477px)"></i>
<i style="top:290px;background:linear-gradient(90deg,#00ffd8 177px,#01ffd8 180px,#44ffd5 203px,#8affd2 224px,#d3ffcf 243px,#fdffce 253px,#fff9c8 255px,#ffd3a9 265px,#ffb18c 277px,#ff9070 292px,#ff7357 310px,#ff5740 333px,#ff3e2a 363px,#ff2616 403px,#ff1104 459px,#ff0b00 480px)"></i>
<i style="top:292px;background:linear-gradient(90deg,#0fd 176px,#01ffdd 179px,#44ffdb 202px,#88ffd9 222px,#d1ffd6 241px,#ffffd4 252px,#ffdbb6 261px,#ffb998 272px,#ff987b 286px,#ff7a61 303px,#ff5d48 325px,#ff4332 353px,#ff2b1d 390px,#ff150a 441px,#ff0900 484px)"></i>
<i style="top:294px;background:linear-gradient(90deg,#00ffe3 175px,#00ffe3 178px,#41ffe1 200px,#85ffdf 220px,#caffdd 238px,#fdffdc 250px,#ffefce 254px,#ffccae 264px,#ffaa90 276px,#ff8a74 291px,#ff6d5a 310px,#ff5141 334px,#ff382a 366px,#ff2016 409px,#ff0c04 468px,#ff0700 487px)"></i>
<i style="top:296px;background:linear-gradient(90deg,#00ffe9 174px,#00ffe8 177px,#2effe7 193px,#74ffe6 214px,#bcffe4 233px,#fffee2 249px,#ffdac1 258px,#ffb7a2 269px,#ff9683 283px,#ff7868 300px,#ff5b4e 322px,#ff4136 350px,#ff2920 387px,#ff140d 438px,#ff0500 490px)"></i>
<i style="top:298px;background:linear-gradient(90deg,#0fe 174px,#01ffee 177px,#44ffed 199px,#8affec 219px,#d2ffeb 237px,#feffea 247px,#ffd4c2 258px,#ffb3a3 269px,#ff9285 283px,#ff7469 300px,#ff584f 322px,#ff3e36 351px,#ff2720 389px,#ff110c 442px,#ff0300 494px)"></i>
<i style="top:300px;background:linear-gradient(90deg,#00fff4 173px,#00fff4 176px,#44fff4 198px,#8bfff3 218px,#d4fff2 236px,#fcfff2 245px,#fffdf0 246px,#ffd9cd 255px,#ffb6ac 266px,#ff968e 279px,#ff7770 296px,#ff5b55 317px,#ff413c 345px,#ff2925 382px,#ff1310 432px,#ff0200 495px,#ff0100 497px)"></i>
<i style="top:302px;background:linear-gradient(90deg,#00fffb 172px,#00fffa 175px,#3afffa 194px,#81fffa 214px,#c9fffa 232px,#fffffa 244px,#ffdad5 253px,#ffb6b2 264px,#ff9693 277px,#ff7876 293px,#ff5c5a 314px,#ff4240 341px,#ff2a28 377px,#ff1413 426px,#ff0100 496px,#f00 500px)"></i>
<i style="top:304px;background:linear-gradient(90deg,#00fdff 172px,#02fdff 175px,#44fdff 196px,#88fdff 215px,#cdfcff 232px,#fffcff 243px,#ffd7da 252px,#ffb4b6 263px,#ff9496 276px,#ff7778 292px,#ff5a5c 313px,#ff4042 340px,#ff282a 376px,#ff1314 425px,#ff0001 494px,#f00 499px)"></i>
<i style="top:306px;background:linear-gradient(90deg,#00f7ff 171px,#01f7ff 174px,#45f6ff 196px,#89f6ff 215px,#d1f5ff 233px,#fef4ff 243px,#ffcdd7 253px,#ffacb4 264px,#ff8e95 277px,#ff7076 294px,#ff555b 315px,#ff3c40 343px,#ff2529 380px,#ff1013 431px,#ff0002 492px,#ff0002 494px)"></i>
<i style="top:308px;background:linear-gradient(90deg,#00f1ff 170px,#00f1ff 173px,#43f0ff 195px,#8aefff 215px,#d1edff 233px,#feedff 243px,#ffd6e7 249px,#ffb5c4 259px,#ff96a4 271px,#ff7985 286px,#ff5e68 305px,#ff444d 330px,#ff2c33 363px,#ff171d 407px,#ff0409 469px,#ff0004 489px)"></i>
<i style="top:310px;background:linear-gradient(90deg,#00ebff 169px,#00ebff 172px,#35eaff 190px,#78e8ff 210px,#c1e6ff 229px,#fde5ff 243px,#ffdff8 245px,#ffbfd5 254px,#ffa0b4 265px,#ff8293 279px,#ff6676 296px,#ff4d5a 318px,#ff343f 347px,#ff1f28 385px,#ff0b12 438px,#ff0005 485px)"></i>
<i style="top:312px;background:linear-gradient(90deg,#00e5ff 169px,#01e5ff 172px,#43e3ff 194px,#87e1ff 214px,#cddfff 232px,#fddeff 243px,#ffdcfd 244px,#ffbcda 253px,#ff9db8 264px,#ff8096 278px,#ff6578 295px,#ff4b5c 317px,#ff3442 345px,#ff1e2a 383px,#ff0b14 435px,#ff0007 480px)"></i>
<i style="top:314px;background:linear-gradient(90deg,#00e0ff 168px,#00e0ff 171px,#45ddff 194px,#88dbff 214px,#d1d8ff 233px,#fcd7ff 243px,#ffd5fe 244px,#ffb6da 253px,#ff99b8 264px,#ff7c97 278px,#ff6179 295px,#ff485d 317px,#ff3243 345px,#ff1c2b 383px,#ff0915 435px,#ff0009 475px)"></i>
<i style="top:316px;background:linear-gradient(90deg,#00daff 167px,#00daff 170px,#40d7ff 192px,#85d5ff 213px,#cdd2ff 232px,#ffcffe 244px,#ffb1db 253px,#ff94b9 264px,#ff7899 278px,#ff5e7a 295px,#ff465e 317px,#ff3044 345px,#ff1b2c 383px,#ff0816 435px,#ff000b 471px)"></i>
<i style="top:318px;background:linear-gradient(90deg,#00d5ff 167px,#02d5ff 170px,#44d1ff 193px,#8aceff 214px,#d1cbff 233px,#ffc8ff 244px,#ffa9d9 254px,#ff8bb5 266px,#ff7196 280px,#ff5777 298px,#ff405b 321px,#ff2a40 351px,#ff1628 391px,#ff0413 446px,#ff000d 466px)"></i>
<i style="top:320px;background:linear-gradient(90deg,#00d0ff 166px,#01cfff 169px,#46ccff 193px,#8bc8ff 214px,#d1c4ff 233px,#ffc2ff 244px,#ffa3d9 254px,#ff87b6 266px,#ff6c95 281px,#ff5377 299px,#ff3c5b 322px,#ff2741 352px,#ff1429 392px,#ff0213 447px,#ff000f 461px)"></i>
<i style="top:322px;background:linear-gradient(90deg,#00cbff 165px,#00caff 168px,#44c6ff 192px,#88c2ff 213px,#cebeff 232px,#febbff 244px,#ff9cd7 255px,#ff80b5 267px,#ff6694 282px,#ff4e75 301px,#ff3859 325px,#ff233f 356px,#ff1027 397px,#ff0012 453px,#f01 456px)"></i>
<i style="top:324px;background:linear-gradient(90deg,#00c6ff 164px,#00c5ff 167px,#3ac2ff 188px,#7fbdff 210px,#c6b9ff 230px,#feb5ff 244px,#ff94d4 256px,#ff7ab3 268px,#ff6293 283px,#ff4a75 302px,#ff3459 326px,#ff213f 357px,#ff0e27 399px,#ff0014 450px,#ff0013 452px)"></i>
<i style="top:326px;background:linear-gradient(90deg,#00c1ff 164px,#01c0ff 167px,#44bcff 191px,#89b7ff 213px,#d1b2ff 233px,#fdafff 244px,#ffa7f5 247px,#ff8bcf 258px,#ff71ad 271px,#ff598d 287px,#ff426f 307px,#ff2d53 333px,#ff1a39 367px,#ff0822 412px,#ff0016 447px)"></i>
<i style="top:328px;background:linear-gradient(90deg,#00bcff 163px,#01bbff 166px,#45b6ff 191px,#8ab1ff 213px,#d1acff 233px,#fda9ff 244px,#ffa4f9 246px,#ff8ad6 256px,#ff70b2 269px,#ff5891 285px,#ff4273 305px,#ff2d57 330px,#ff1a3d 363px,#ff0925 407px,#ff0018 442px)"></i>
<i style="top:330px;background:linear-gradient(90deg,#00b7ff 162px,#00b7ff 165px,#44b1ff 190px,#88acff 212px,#cea7ff 232px,#fca3ff 244px,#ffa2fe 245px,#ff88da 255px,#ff70b8 267px,#ff5998 282px,#ff4379 301px,#ff2e5d 325px,#ff1c43 356px,#ff0b2b 397px,#ff001a 437px)"></i>
<i style="top:332px;background:linear-gradient(90deg,#00b3ff 161px,#00b2ff 164px,#34aeff 184px,#78a8ff 207px,#bfa2ff 228px,#ff9cfe 245px,#ff83db 255px,#ff6cb9 267px,#f59 282px,#ff407a 301px,#ff2c5e 325px,#ff1a43 356px,#ff092c 397px,#ff001d 432px,#ff001d 433px)"></i>
<i style="top:334px;background:linear-gradient(90deg,#00aeff 161px,#01adff 164px,#43a8ff 189px,#89a1ff 212px,#d19bff 233px,#ff97ff 245px,#ff7fdb 255px,#ff66b7 268px,#ff5096 284px,#ff3a77 304px,#ff275b 329px,#ff1641 361px,#ff0629 404px,#ff001f 428px)"></i>
<i style="top:336px;background:linear-gradient(90deg,#0af 160px,#00a9ff 163px,#45a3ff 189px,#8a9cff 212px,#d196ff 233px,#ff91ff 245px,#ff78d9 256px,#ff61b6 269px,#ff4b95 285px,#ff3777 305px,#ff245b 330px,#ff1340 363px,#ff0329 407px,#f02 423px)"></i>
<i style="top:338px;background:linear-gradient(90deg,#00a5ff 159px,#00a5ff 162px,#3e9fff 186px,#8498ff 210px,#ca91ff 231px,#fe8cff 245px,#ff72d7 257px,#ff5cb5 270px,#ff4794 286px,#ff3476 306px,#ff215a 332px,#ff1140 365px,#ff0128 409px,#ff0025 418px)"></i>
<i style="top:340px;background:linear-gradient(90deg,#00a1ff 159px,#01a0ff 162px,#449aff 188px,#8b92ff 212px,#d18bff 233px,#fe87ff 245px,#ff6cd4 258px,#ff57b3 271px,#ff4292 288px,#ff2f73 309px,#ff1d57 336px,#ff0c3d 371px,#ff0028 412px,#ff0027 414px)"></i>
<i style="top:342px;background:linear-gradient(90deg,#009dff 158px,#019cff 161px,#4395ff 187px,#898eff 211px,#d186ff 233px,#fe81ff 245px,#f7e 250px,#ff61ca 262px,#ff4da9 276px,#ff3989 294px,#ff276c 316px,#ff1650 345px,#ff0737 383px,#ff002a 409px)"></i>
<i style="top:344px;background:linear-gradient(90deg,#09f 157px,#0098ff 160px,#4491ff 187px,#8989ff 211px,#d181ff 233px,#fd7cff 245px,#ff79f9 247px,#ff63d6 258px,#ff4eb3 272px,#ff3b92 289px,#ff2974 310px,#ff1858 337px,#ff093e 372px,#ff002e 403px,#ff002d 404px)"></i>
<i style="top:346px;background:linear-gradient(90deg,#0095ff 156px,#0094ff 159px,#3b8dff 183px,#8185ff 208px,#c77dff 230px,#fd77ff 245px,#ff74fa 247px,#ff5fd7 258px,#ff4bb3 272px,#ff3893 289px,#ff2775 310px,#ff1659 337px,#ff073f 372px,#ff0030 399px,#ff0030 400px)"></i>
<i style="top:348px;background:linear-gradient(90deg,#0091ff 156px,#0190ff 159px,#48f 186px,#8b80ff 211px,#d277ff 233px,#ff71fe 246px,#ff5dda 257px,#ff49b6 271px,#ff3696 288px,#ff2577 309px,#ff155b 336px,#ff0640 371px,#f03 394px,#f03 395px)"></i>
<i style="top:350px;background:linear-gradient(90deg,#008dff 155px,#008cff 158px,#4584ff 186px,#8b7bff 211px,#d273ff 233px,#ff6dff 246px,#ff59db 257px,#ff46b7 271px,#ff3496 288px,#ff2378 309px,#ff135c 336px,#ff0541 371px,#ff0036 390px)"></i>
<i style="top:352px;background:linear-gradient(90deg,#0089ff 154px,#0089ff 157px,#4180ff 184px,#8678ff 209px,#ce6eff 232px,#ff68ff 246px,#ff55db 257px,#ff42b8 271px,#ff3197 288px,#ff2079 309px,#ff115c 336px,#ff0342 371px,#ff003a 385px)"></i>
<i style="top:354px;background:linear-gradient(90deg,#0086ff 153px,#0185ff 157px,#457cff 185px,#8a73ff 210px,#d26aff 233px,#ff64ff 246px,#ff4ed6 259px,#ff3db5 273px,#ff2b93 291px,#ff1c75 313px,#ff0d59 341px,#ff003f 378px,#ff003d 381px)"></i>
<i style="top:356px;background:linear-gradient(90deg,#0082ff 153px,#0181ff 156px,#4378ff 184px,#8a6fff 210px,#d265ff 233px,#fe5fff 246px,#ff49d4 260px,#ff37b1 275px,#ff2791 293px,#ff1872 316px,#ff0a56 345px,#ff0042 374px,#ff0041 376px)"></i>
<i style="top:358px;background:linear-gradient(90deg,#007fff 152px,#007eff 155px,#4574ff 184px,#8b6aff 210px,#d261ff 233px,#fe5bff 246px,#ff48db 258px,#ff38b8 272px,#ff2898 289px,#ff1879 311px,#ff0a5c 339px,#ff0045 370px,#ff0045 371px)"></i>
<i style="top:360px;background:linear-gradient(90deg,#007bff 151px,#007aff 154px,#3e71ff 181px,#8368ff 207px,#cb5dff 231px,#fd56ff 246px,#ff52f6 249px,#ff41d3 261px,#ff30b1 276px,#ff2190 295px,#ff1272 318px,#ff0556 348px,#ff0049 366px)"></i>
<i style="top:362px;background:linear-gradient(90deg,#07f 151px,#0177ff 154px,#446dff 183px,#8963ff 209px,#d258ff 233px,#fd52ff 246px,#ff4ffa 248px,#ff3fd6 260px,#ff2eb4 275px,#ff2094 293px,#ff1175 316px,#ff0459 345px,#ff004d 361px,#ff004c 362px)"></i>
<i style="top:364px;background:linear-gradient(90deg,#0074ff 150px,#0173ff 153px,#4369ff 182px,#8a5fff 209px,#d254ff 233px,#ff4dfe 247px,#ff3cda 259px,#ff2cb6 274px,#ff1e96 292px,#ff1077 315px,#ff035b 344px,#ff0051 357px)"></i>
<i style="top:366px;background:linear-gradient(90deg,#0071ff 149px,#0070ff 152px,#46f 182px,#8a5bff 209px,#d250ff 233px,#ff49ff 247px,#ff39da 259px,#ff2ab7 274px,#ff1b97 292px,#ff0e78 315px,#ff015b 344px,#f05 352px)"></i>
<i style="top:368px;background:linear-gradient(90deg,#006eff 148px,#026cff 152px,#4562ff 182px,#8b57ff 209px,#d24cff 233px,#ff45ff 247px,#ff36db 259px,#ff27b8 274px,#ff1998 292px,#ff0c79 315px,#ff005c 344px,#ff0059 348px)"></i>
<i style="top:370px;background:linear-gradient(90deg,#006aff 148px,#0169ff 151px,#445fff 181px,#8954ff 208px,#d248ff 233px,#ff41ff 247px,#ff31d9 260px,#ff23b7 275px,#ff1595 294px,#ff0977 317px,#ff0060 341px,#ff005e 343px)"></i>
<i style="top:372px;background:linear-gradient(90deg,#0067ff 147px,#06f 150px,#455bff 181px,#8c50ff 209px,#d544ff 234px,#fe3dff 247px,#ff2cd4 262px,#ff1eb1 278px,#ff1090 298px,#ff0472 323px,#ff0064 337px,#ff0063 338px)"></i>
<i style="top:374px;background:linear-gradient(90deg,#0064ff 146px,#0063ff 149px,#4158ff 179px,#874dff 207px,#cf41ff 232px,#fe39ff 247px,#ff28d3 263px,#ff1ab0 279px,#ff0e90 299px,#ff0271 324px,#ff0068 333px)"></i>
<i style="top:376px;background:linear-gradient(90deg,#0061ff 146px,#0160ff 149px,#4555ff 180px,#8b49ff 208px,#d23dff 233px,#fd35ff 247px,#ff31f4 251px,#ff23ce 265px,#ff16ab 282px,#ff098b 303px,#ff0070 326px,#ff006d 329px)"></i>
<i style="top:378px;background:linear-gradient(90deg,#005eff 145px,#015dff 148px,#4452ff 179px,#8946ff 207px,#d239ff 233px,#fd32ff 247px,#ff30fb 249px,#ff22d6 262px,#ff16b4 278px,#ff0a93 298px,#ff0075 322px,#ff0073 324px)"></i>
<i style="top:380px;background:linear-gradient(90deg,#005bff 144px,#005aff 147px,#454eff 179px,#8c42ff 208px,#d535ff 234px,#ff2dfe 248px,#ff20d9 261px,#ff14b6 277px,#ff0895 297px,#ff007b 317px,#ff0079 319px)"></i>
<i style="top:382px;background:linear-gradient(90deg,#0059ff 143px,#0257ff 147px,#464bff 179px,#8c3eff 208px,#d531ff 234px,#ff2afe 248px,#ff1dda 261px,#ff11b7 277px,#ff0696 297px,#ff0081 313px,#ff0080 314px)"></i>
<i style="top:384px;background:linear-gradient(90deg,#05f 143px,#0154ff 146px,#4448ff 178px,#8a3bff 207px,#d22fff 233px,#ff26ff 248px,#ff1adb 261px,#ff0fb8 277px,#ff0496 297px,#ff0086 309px,#ff0085 310px)"></i>
<i style="top:386px;background:linear-gradient(90deg,#0053ff 142px,#0052ff 145px,#4345ff 177px,#8839ff 206px,#d22bff 233px,#ff23ff 248px,#ff16d9 262px,#ff0bb6 278px,#ff0196 298px,#ff008c 305px)"></i>
<i style="top:388px;background:linear-gradient(90deg,#0050ff 141px,#004fff 144px,#4243ff 176px,#8935ff 206px,#d228ff 233px,#fe1fff 248px,#ff13d7 263px,#ff08b3 280px,#ff0096 298px,#ff0094 300px)"></i>
<i style="top:390px;background:linear-gradient(90deg,#004dff 140px,#014cff 144px,#453fff 177px,#8c32ff 207px,#d424ff 234px,#fe1cff 248px,#ff0fd5 264px,#ff05b2 281px,#ff009d 294px,#ff009a 296px)"></i>
<i style="top:392px;background:linear-gradient(90deg,#004bff 140px,#0149ff 143px,#443cff 176px,#8a2fff 206px,#d221ff 233px,#fe19ff 248px,#ff12e9 256px,#ff08c6 271px,#ff00a7 288px,#ff00a2 291px)"></i>
<i style="top:394px;background:linear-gradient(90deg,#0048ff 139px,#0047ff 142px,#4539ff 176px,#8a2cff 206px,#d21eff 233px,#fd15ff 248px,#ff13f8 251px,#ff09d4 265px,#ff00b2 282px,#ff00ab 286px)"></i>
<i style="top:396px;background:linear-gradient(90deg,#0046ff 138px,#04f 141px,#4038ff 173px,#862aff 204px,#cf1bff 232px,#ff12fe 249px,#ff08d9 263px,#ff00b8 279px,#ff00b4 281px)"></i>
<i style="top:398px;background:linear-gradient(90deg,#0043ff 138px,#0142ff 141px,#4534ff 175px,#8c26ff 206px,#d417ff 234px,#ff0efe 249px,#ff05da 263px,#ff00c2 274px,#ff00bc 277px)"></i>
<i style="top:400px;background:linear-gradient(90deg,#0040ff 137px,#013fff 140px,#4432ff 174px,#8a23ff 205px,#d215ff 233px,#ff0bff 249px,#ff02da 263px,#ff00c9 271px,#ff00c7 272px)"></i>
<i style="top:402px;background:linear-gradient(90deg,#003eff 136px,#003dff 139px,#452fff 174px,#8a20ff 205px,#d212ff 233px,#ff08ff 249px,#ff00d8 264px,#ff00d2 267px)"></i>
<i style="top:404px;background:linear-gradient(90deg,#003cff 135px,#013aff 139px,#462cff 174px,#8b1eff 205px,#d20fff 233px,#fe05ff 249px,#ff00e2 260px,#ff00de 262px)"></i>
<i style="top:406px;background:linear-gradient(90deg,#0039ff 135px,#0138ff 138px,#442aff 173px,#8b1bff 205px,#d40bff 234px,#fe02ff 249px,#ff00ea 257px,#ff00e8 258px)"></i>
<i style="top:408px;background:linear-gradient(90deg,#0037ff 134px,#0036ff 137px,#4327ff 172px,#8918ff 204px,#d209ff 233px,#fe00ff 249px,#ff00f5 253px)"></i>
<i style="top:410px;background:linear-gradient(90deg,#0035ff 133px,#03f 136px,#4225ff 171px,#8816ff 203px,#cf07ff 232px,#f500ff 246px,#fb00ff 248px)"></i>
<i style="top:412px;background:linear-gradient(90deg,#0032ff 132px,#0131ff 136px,#4522ff 172px,#8a13ff 204px,#d203ff 233px,#ea00ff 242px,#ec00ff 243px)"></i>
<i style="top:414px;background:linear-gradient(90deg,#0030ff 132px,#012fff 135px,#4420ff 171px,#8b10ff 204px,#d400ff 234px,#e100ff 239px)"></i>
<i style="top:416px;background:linear-gradient(90deg,#002eff 131px,#002dff 134px,#451dff 171px,#8b0eff 204px,#c0f 231px,#d400ff 234px)"></i>
<i style="top:418px;background:linear-gradient(90deg,#002cff 130px,#012aff 134px,#461bff 171px,#8c0bff 204px,#c200ff 227px,#c700ff 229px)"></i>
<i style="top:420px;background:linear-gradient(90deg,#0029ff 130px,#0128ff 133px,#4519ff 170px,#8a09ff 203px,#b600ff 222px,#be00ff 225px)"></i>
<i style="top:422px;background:linear-gradient(90deg,#0027ff 129px,#0226ff 133px,#4616ff 170px,#8d06ff 204px,#ab00ff 217px,#b200ff 220px)"></i>
<i style="top:424px;background:linear-gradient(90deg,#0025ff 128px,#0024ff 131px,#4514ff 169px,#8b04ff 203px,#a200ff 213px,#a600ff 215px)"></i>
<i style="top:426px;background:linear-gradient(90deg,#0023ff 127px,#0122ff 131px,#4512ff 169px,#8b01ff 203px,#9b00ff 210px)"></i>
<i style="top:428px;background:linear-gradient(90deg,#0021ff 127px,#0120ff 130px,#4410ff 168px,#8a00ff 202px,#9300ff 206px)"></i>
<i style="top:430px;background:linear-gradient(90deg,#001fff 126px,#021eff 130px,#450dff 168px,#8200ff 198px,#80f 201px)"></i>
<i style="top:432px;background:linear-gradient(90deg,#001dff 125px,#011cff 129px,#460bff 168px,#7a00ff 194px,#7e00ff 196px)"></i>
<i style="top:434px;background:linear-gradient(90deg,#001bff 125px,#011aff 128px,#4509ff 167px,#7000ff 189px,#7400ff 191px)"></i>
<i style="top:436px;background:linear-gradient(90deg,#0019ff 124px,#0218ff 128px,#4607ff 167px,#6900ff 185px,#6d00ff 187px)"></i>
<i style="top:438px;background:linear-gradient(90deg,#0017ff 123px,#0216ff 127px,#4505ff 166px,#5f00ff 180px,#6300ff 182px)"></i>
<i style="top:440px;background:linear-gradient(90deg,#0016ff 122px,#0114ff 126px,#4603ff 166px,#5a00ff 177px)"></i>
<i style="top:442px;background:linear-gradient(90deg,#0013ff 122px,#0112ff 125px,#4501ff 165px,#5400ff 173px)"></i>
<i style="top:444px;background:linear-gradient(90deg,#0012ff 121px,#0210ff 125px,#4600ff 165px,#4b00ff 168px)"></i>
<i style="top:446px;background:linear-gradient(90deg,#0010ff 120px,#020eff 124px,#3f00ff 161px,#4300ff 163px)"></i>
<i style="top:448px;background:linear-gradient(90deg,#000eff 119px,#010dff 123px,#3700ff 156px,#3b00ff 158px)"></i>
<i style="top:450px;background:linear-gradient(90deg,#000cff 119px,#020bff 123px,#3100ff 152px,#3500ff 154px)"></i>
<i style="top:452px;background:linear-gradient(90deg,#000bff 118px,#0209ff 122px,#2a00ff 147px,#2d00ff 149px)"></i>
<i style="top:454px;background:linear-gradient(90deg,#0009ff 117px,#0108ff 121px,#20f 142px,#2600ff 144px)"></i>
<i style="top:456px;background:linear-gradient(90deg,#0007ff 117px,#0106ff 120px,#1d00ff 138px,#1f00ff 139px)"></i>
<i style="top:458px;background:linear-gradient(90deg,#0006ff 116px,#0204ff 120px,#1800ff 134px,#1900ff 135px)"></i>
<i style="top:460px;background:linear-gradient(90deg,#0004ff 115px,#0202ff 119px,#1200ff 130px)"></i>
<i style="top:462px;background:linear-gradient(90deg,#0003ff 114px,#0101ff 118px,#0c00ff 125px)"></i>
<i style="top:464px;background:linear-gradient(90deg,#0001ff 114px,#0200ff 118px,#0500ff 120px)"></i>
</div>
<div class="c" style="left:1507px;top:79px;width:196px;height:154px;background:#2e2e2e"></div>
<div class="c" style="left:1509px;top:83px;width:191px;height:148px;clip-path:none">
<i style="top:0px;background:linear-gradient(90deg,#007e99 0,#017b99 124px,#1d7a99 191px)"></i>
<i style="top:2px;background:linear-gradient(90deg,#007d99 0,#017a99 123px,#1d7999 191px)"></i>
<i style="top:4px;background:linear-gradient(90deg,#007c99 0,#017a99 123px,#1d7899 191px)"></i>
<i style="top:6px;background:linear-gradient(90deg,#007c99 0,#017999 122px,#1e7799 191px)"></i>
<i style="top:8px;background:linear-gradient(90deg,#007b99 0,#017899 121px,#1e7699 191px)"></i>
<i style="top:10px;background:linear-gradient(90deg,#007a99 0,#017799 120px,#1e7699 191px)"></i>
<i style="top:12px;background:linear-gradient(90deg,#007999 0,#017799 120px,#1e7599 191px)"></i>
<i style="top:14px;background:linear-gradient(90deg,#007999 0,#017699 119px,#1e7499 191px)"></i>
<i style="top:16px;background:linear-gradient(90deg,#007899 0,#017599 118px,#1f7399 191px)"></i>
<i style="top:18px;background:linear-gradient(90deg,#079 0,#017499 118px,#1f7299 191px)"></i>
<i style="top:20px;background:linear-gradient(90deg,#079 0,#017499 117px,#1f7299 191px)"></i>
<i style="top:22px;background:linear-gradient(90deg,#007699 0,#017399 116px,#1f7199 191px)"></i>
<i style="top:24px;background:linear-gradient(90deg,#007599 0,#017299 116px,#207099 191px)"></i>
<i style="top:26px;background:linear-gradient(90deg,#007599 0,#017299 115px,#206f99 191px)"></i>
<i style="top:28px;background:linear-gradient(90deg,#007499 0,#017199 114px,#206f99 191px)"></i>
<i style="top:30px;background:linear-gradient(90deg,#007399 0,#017099 113px,#206e99 191px)"></i>
<i style="top:32px;background:linear-gradient(90deg,#007299 0,#016f99 113px,#206d99 191px)"></i>
<i style="top:34px;background:linear-gradient(90deg,#007299 0,#016f99 112px,#216c99 191px)"></i>
<i style="top:36px;background:linear-gradient(90deg,#007199 0,#016e99 111px,#216c99 191px)"></i>
<i style="top:38px;background:linear-gradient(90deg,#007099 0,#016d99 111px,#216b99 191px)"></i>
<i style="top:40px;background:linear-gradient(90deg,#007099 0,#016d99 110px,#216a99 191px)"></i>
<i style="top:42px;background:linear-gradient(90deg,#006f99 0,#016c99 109px,#216999 191px)"></i>
<i style="top:44px;background:linear-gradient(90deg,#006f99 0,#016b99 109px,#226999 191px)"></i>
<i style="top:46px;background:linear-gradient(90deg,#006e99 0,#016b99 108px,#226899 191px)"></i>
<i style="top:48px;background:linear-gradient(90deg,#006d99 0,#016a99 107px,#226799 191px)"></i>
<i style="top:50px;background:linear-gradient(90deg,#006d99 0,#016999 106px,#269 191px)"></i>
<i style="top:52px;background:linear-gradient(90deg,#006c99 0,#016999 106px,#236699 191px)"></i>
<i style="top:54px;background:linear-gradient(90deg,#006b99 0,#016899 105px,#236599 191px)"></i>
<i style="top:56px;background:linear-gradient(90deg,#006b99 0,#016799 104px,#236499 191px)"></i>
<i style="top:58px;background:linear-gradient(90deg,#006a99 0,#016799 104px,#236499 191px)"></i>
<i style="top:60px;background:linear-gradient(90deg,#006999 0,#016699 103px,#236399 191px)"></i>
<i style="top:62px;background:linear-gradient(90deg,#006999 0,#016599 102px,#246299 191px)"></i>
<i style="top:64px;background:linear-gradient(90deg,#006899 0,#016599 102px,#246199 191px)"></i>
<i style="top:66px;background:linear-gradient(90deg,#006799 0,#016499 101px,#246199 191px)"></i>
<i style="top:68px;background:linear-gradient(90deg,#006799 0,#016399 100px,#246099 191px)"></i>
<i style="top:70px;background:linear-gradient(90deg,#069 0,#016399 99px,#245f99 191px)"></i>
<i style="top:72px;background:linear-gradient(90deg,#069 0,#016299 99px,#255f99 191px)"></i>
<i style="top:74px;background:linear-gradient(90deg,#006599 0,#016299 98px,#255e99 191px)"></i>
<i style="top:76px;background:linear-gradient(90deg,#006499 0,#016199 97px,#255d99 191px)"></i>
<i style="top:78px;background:linear-gradient(90deg,#006499 0,#016099 97px,#255d99 191px)"></i>
<i style="top:80px;background:linear-gradient(90deg,#006399 0,#016099 96px,#255c99 191px)"></i>
<i style="top:82px;background:linear-gradient(90deg,#006299 0,#015f99 95px,#255b99 191px)"></i>
<i style="top:84px;background:linear-gradient(90deg,#006299 0,#015e99 95px,#265b99 191px)"></i>
<i style="top:86px;background:linear-gradient(90deg,#006199 0,#015e99 94px,#265a99 191px)"></i>
<i style="top:88px;background:linear-gradient(90deg,#006199 0,#015d99 93px,#265999 191px)"></i>
<i style="top:90px;background:linear-gradient(90deg,#006099 0,#015d99 92px,#265999 191px)"></i>
<i style="top:92px;background:linear-gradient(90deg,#005f99 0,#015c99 92px,#265899 191px)"></i>
<i style="top:94px;background:linear-gradient(90deg,#005f99 0,#015b99 91px,#275799 191px)"></i>
<i style="top:96px;background:linear-gradient(90deg,#005e99 0,#015b99 90px,#275799 191px)"></i>
<i style="top:98px;background:linear-gradient(90deg,#005e99 0,#015a99 90px,#275699 191px)"></i>
<i style="top:100px;background:linear-gradient(90deg,#005d99 0,#015a99 89px,#275599 191px)"></i>
<i style="top:102px;background:linear-gradient(90deg,#005c99 0,#015999 88px,#275599 191px)"></i>
<i style="top:104px;background:linear-gradient(90deg,#005c99 0,#015999 87px,#285499 191px)"></i>
<i style="top:106px;background:linear-gradient(90deg,#005b99 0,#015899 87px,#285399 191px)"></i>
<i style="top:108px;background:linear-gradient(90deg,#005b99 0,#015799 86px,#285399 191px)"></i>
<i style="top:110px;background:linear-gradient(90deg,#005a99 0,#015799 85px,#285299 191px)"></i>
<i style="top:112px;background:linear-gradient(90deg,#005a99 0,#015699 85px,#285299 191px)"></i>
<i style="top:114px;background:linear-gradient(90deg,#005999 0,#015699 84px,#285199 191px)"></i>
<i style="top:116px;background:linear-gradient(90deg,#005899 0,#015599 83px,#295099 191px)"></i>
<i style="top:118px;background:linear-gradient(90deg,#005899 0,#015499 83px,#295099 191px)"></i>
<i style="top:120px;background:linear-gradient(90deg,#005799 0,#015499 82px,#294f99 191px)"></i>
<i style="top:122px;background:linear-gradient(90deg,#005799 0,#015399 81px,#294e99 191px)"></i>
<i style="top:124px;background:linear-gradient(90deg,#005699 0,#015399 81px,#294e99 191px)"></i>
<i style="top:126px;background:linear-gradient(90deg,#005699 0,#015299 80px,#294d99 191px)"></i>
<i style="top:128px;background:linear-gradient(90deg,#059 0,#015299 79px,#2a4d99 191px)"></i>
<i style="top:130px;background:linear-gradient(90deg,#005499 0,#015199 78px,#2a4c99 191px)"></i>
<i style="top:132px;background:linear-gradient(90deg,#005499 0,#015199 78px,#2a4b99 191px)"></i>
<i style="top:134px;background:linear-gradient(90deg,#005399 0,#015099 77px,#2a4b99 191px)"></i>
<i style="top:136px;background:linear-gradient(90deg,#005399 0,#015099 76px,#2a4a99 191px)"></i>
<i style="top:138px;background:linear-gradient(90deg,#005299 0,#014f99 76px,#2a4999 191px)"></i>
<i style="top:140px;background:linear-gradient(90deg,#005299 0,#014e99 75px,#2b4999 191px)"></i>
<i style="top:142px;background:linear-gradient(90deg,#005199 0,#014e99 74px,#2b4899 191px)"></i>
<i style="top:144px;background:linear-gradient(90deg,#005199 0,#014d99 74px,#2b4899 191px)"></i>
<i style="top:146px;background:linear-gradient(90deg,#005099 0,#014d99 73px,#2b4799 191px)"></i>
</div>
<div class="c" style="left:1509px;top:83px;width:191px;height:148px;clip-path:polygon(122.26px 0px,191px 0px,191px 148px,69.76px 148px)">
<i style="top:0px;background:linear-gradient(90deg,#00d1ff 0,#01cdff 123px,#30cbff 191px)"></i>
<i style="top:2px;background:linear-gradient(90deg,#00d0ff 0,#01ccff 122px,#31c9ff 191px)"></i>
<i style="top:4px;background:linear-gradient(90deg,#00cfff 0,#01cbff 122px,#31c8ff 191px)"></i>
<i style="top:6px;background:linear-gradient(90deg,#00ceff 0,#01caff 121px,#31c7ff 191px)"></i>
<i style="top:8px;background:linear-gradient(90deg,#00cdff 0,#01c8ff 120px,#32c5ff 191px)"></i>
<i style="top:10px;background:linear-gradient(90deg,#00cbff 0,#00c7ff 119px,#32c4ff 191px)"></i>
<i style="top:12px;background:linear-gradient(90deg,#00caff 0,#01c6ff 119px,#32c3ff 191px)"></i>
<i style="top:14px;background:linear-gradient(90deg,#00c9ff 0,#01c5ff 118px,#33c1ff 191px)"></i>
<i style="top:16px;background:linear-gradient(90deg,#00c8ff 0,#00c3ff 117px,#33c0ff 191px)"></i>
<i style="top:18px;background:linear-gradient(90deg,#00c7ff 0,#01c2ff 117px,#34bfff 191px)"></i>
<i style="top:20px;background:linear-gradient(90deg,#00c6ff 0,#01c1ff 116px,#34beff 191px)"></i>
<i style="top:22px;background:linear-gradient(90deg,#00c5ff 0,#01c0ff 115px,#34bcff 191px)"></i>
<i style="top:24px;background:linear-gradient(90deg,#00c3ff 0,#00bfff 114px,#35bbff 191px)"></i>
<i style="top:26px;background:linear-gradient(90deg,#00c2ff 0,#01bdff 114px,#35baff 191px)"></i>
<i style="top:28px;background:linear-gradient(90deg,#00c1ff 0,#01bcff 113px,#35b8ff 191px)"></i>
<i style="top:30px;background:linear-gradient(90deg,#00c0ff 0,#0bf 112px,#36b7ff 191px)"></i>
<i style="top:32px;background:linear-gradient(90deg,#00bfff 0,#01baff 112px,#36b6ff 191px)"></i>
<i style="top:34px;background:linear-gradient(90deg,#00beff 0,#01b9ff 111px,#36b5ff 191px)"></i>
<i style="top:36px;background:linear-gradient(90deg,#00bdff 0,#01b8ff 110px,#37b3ff 191px)"></i>
<i style="top:38px;background:linear-gradient(90deg,#0bf 0,#01b6ff 110px,#37b2ff 191px)"></i>
<i style="top:40px;background:linear-gradient(90deg,#00baff 0,#01b5ff 109px,#37b1ff 191px)"></i>
<i style="top:42px;background:linear-gradient(90deg,#00b9ff 0,#01b4ff 108px,#38b0ff 191px)"></i>
<i style="top:44px;background:linear-gradient(90deg,#00b8ff 0,#00b3ff 107px,#38aeff 191px)"></i>
<i style="top:46px;background:linear-gradient(90deg,#00b7ff 0,#01b2ff 107px,#39adff 191px)"></i>
<i style="top:48px;background:linear-gradient(90deg,#00b6ff 0,#01b1ff 106px,#39acff 191px)"></i>
<i style="top:50px;background:linear-gradient(90deg,#00b5ff 0,#01b0ff 105px,#39abff 191px)"></i>
<i style="top:52px;background:linear-gradient(90deg,#00b4ff 0,#01afff 105px,#3aaaff 191px)"></i>
<i style="top:54px;background:linear-gradient(90deg,#00b3ff 0,#01adff 104px,#3aa8ff 191px)"></i>
<i style="top:56px;background:linear-gradient(90deg,#00b2ff 0,#01acff 103px,#3aa7ff 191px)"></i>
<i style="top:58px;background:linear-gradient(90deg,#00b1ff 0,#01abff 103px,#3ba6ff 191px)"></i>
<i style="top:60px;background:linear-gradient(90deg,#00b0ff 0,#01aaff 102px,#3ba5ff 191px)"></i>
<i style="top:62px;background:linear-gradient(90deg,#00aeff 0,#01a9ff 101px,#3ba4ff 191px)"></i>
<i style="top:64px;background:linear-gradient(90deg,#00adff 0,#00a8ff 100px,#3ca2ff 191px)"></i>
<i style="top:66px;background:linear-gradient(90deg,#00acff 0,#01a7ff 100px,#3ca1ff 191px)"></i>
<i style="top:68px;background:linear-gradient(90deg,#00abff 0,#01a6ff 99px,#3ca0ff 191px)"></i>
<i style="top:70px;background:linear-gradient(90deg,#0af 0,#01a5ff 98px,#3d9fff 191px)"></i>
<i style="top:72px;background:linear-gradient(90deg,#00a9ff 0,#01a4ff 98px,#3d9eff 191px)"></i>
<i style="top:74px;background:linear-gradient(90deg,#00a8ff 0,#01a3ff 97px,#3d9dff 191px)"></i>
<i style="top:76px;background:linear-gradient(90deg,#00a7ff 0,#01a2ff 96px,#3d9cff 191px)"></i>
<i style="top:78px;background:linear-gradient(90deg,#00a6ff 0,#00a1ff 95px,#3e9aff 191px)"></i>
<i style="top:80px;background:linear-gradient(90deg,#00a5ff 0,#01a0ff 95px,#3e99ff 191px)"></i>
<i style="top:82px;background:linear-gradient(90deg,#00a4ff 0,#019fff 94px,#3e98ff 191px)"></i>
<i style="top:84px;background:linear-gradient(90deg,#00a3ff 0,#019eff 93px,#3f97ff 191px)"></i>
<i style="top:86px;background:linear-gradient(90deg,#00a2ff 0,#019dff 93px,#3f96ff 191px)"></i>
<i style="top:88px;background:linear-gradient(90deg,#00a1ff 0,#019cff 92px,#3f95ff 191px)"></i>
<i style="top:90px;background:linear-gradient(90deg,#00a0ff 0,#019bff 91px,#3f94ff 190px,#4094ff 191px)"></i>
<i style="top:92px;background:linear-gradient(90deg,#009fff 0,#0199ff 91px,#3f93ff 190px,#4093ff 191px)"></i>
<i style="top:94px;background:linear-gradient(90deg,#009eff 0,#0198ff 90px,#3f92ff 189px,#4092ff 191px)"></i>
<i style="top:96px;background:linear-gradient(90deg,#009dff 0,#0198ff 89px,#3f91ff 189px,#4190ff 191px)"></i>
<i style="top:98px;background:linear-gradient(90deg,#009cff 0,#0097ff 88px,#3f90ff 188px,#418fff 191px)"></i>
<i style="top:100px;background:linear-gradient(90deg,#009bff 0,#0196ff 88px,#3f8eff 188px,#418eff 191px)"></i>
<i style="top:102px;background:linear-gradient(90deg,#009aff 0,#0195ff 87px,#3f8dff 187px,#428dff 191px)"></i>
<i style="top:104px;background:linear-gradient(90deg,#09f 0,#0194ff 86px,#3f8cff 187px,#428cff 191px)"></i>
<i style="top:106px;background:linear-gradient(90deg,#0098ff 0,#0193ff 86px,#408bff 187px,#428bff 191px)"></i>
<i style="top:108px;background:linear-gradient(90deg,#0097ff 0,#0192ff 85px,#3f8aff 186px,#428aff 191px)"></i>
<i style="top:110px;background:linear-gradient(90deg,#0096ff 0,#0191ff 84px,#3f89ff 185px,#4389ff 191px)"></i>
<i style="top:112px;background:linear-gradient(90deg,#0095ff 0,#0090ff 83px,#3f88ff 185px,#4388ff 191px)"></i>
<i style="top:114px;background:linear-gradient(90deg,#0094ff 0,#018fff 83px,#3f87ff 185px,#4387ff 191px)"></i>
<i style="top:116px;background:linear-gradient(90deg,#0093ff 0,#018eff 82px,#3f86ff 184px,#4486ff 191px)"></i>
<i style="top:118px;background:linear-gradient(90deg,#0092ff 0,#018dff 81px,#3f85ff 183px,#4485ff 191px)"></i>
<i style="top:120px;background:linear-gradient(90deg,#0091ff 0,#018cff 81px,#4084ff 184px,#4484ff 191px)"></i>
<i style="top:122px;background:linear-gradient(90deg,#0090ff 0,#018bff 80px,#3f83ff 183px,#4583ff 191px)"></i>
<i style="top:124px;background:linear-gradient(90deg,#008fff 0,#018aff 79px,#3f82ff 182px,#4582ff 191px)"></i>
<i style="top:126px;background:linear-gradient(90deg,#008fff 0,#0189ff 79px,#3f81ff 182px,#4581ff 191px)"></i>
<i style="top:128px;background:linear-gradient(90deg,#008eff 0,#0188ff 78px,#4080ff 182px,#4580ff 191px)"></i>
<i style="top:130px;background:linear-gradient(90deg,#008dff 0,#0187ff 77px,#3f7fff 181px,#467fff 191px)"></i>
<i style="top:132px;background:linear-gradient(90deg,#008cff 0,#0186ff 76px,#3f7eff 180px,#467eff 191px)"></i>
<i style="top:134px;background:linear-gradient(90deg,#008bff 0,#0185ff 76px,#3f7dff 180px,#467cff 191px)"></i>
<i style="top:136px;background:linear-gradient(90deg,#008aff 0,#0185ff 75px,#3f7cff 179px,#477bff 191px)"></i>
<i style="top:138px;background:linear-gradient(90deg,#0089ff 0,#0184ff 74px,#3f7bff 179px,#477aff 191px)"></i>
<i style="top:140px;background:linear-gradient(90deg,#08f 0,#0183ff 74px,#3f7bff 179px,#4779ff 191px)"></i>
<i style="top:142px;background:linear-gradient(90deg,#0087ff 0,#0182ff 73px,#3f7aff 178px,#4778ff 191px)"></i>
<i style="top:144px;background:linear-gradient(90deg,#0086ff 0,#0181ff 72px,#3f79ff 177px,#4877ff 191px)"></i>
<i style="top:146px;background:linear-gradient(90deg,#0085ff 0,#0080ff 71px,#3f78ff 177px,#4877ff 191px)"></i>
</div>
<svg width="1715" height="886" viewBox="0 0 1715 886"><defs><linearGradient id="b0"><stop offset="0" stop-color="#61b3c6"/><stop offset=".22" stop-color="#0085a3"/><stop offset=".55" stop-color="#0085a3"/><stop offset="1" stop-color="#00333e"/></linearGradient><linearGradient id="b1"><stop offset="0" stop-color="#d596bd"/><stop offset=".22" stop-color="#bb5695"/><stop offset=".55" stop-color="#bb5695"/><stop offset="1" stop-color="#472139"/></linearGradient><linearGradient id="b2"><stop offset="0" stop-color="#f0dc74"/><stop offset=".22" stop-color="#e7c71f"/><stop offset=".55" stop-color="#e7c71f"/><stop offset="1" stop-color="#584c0c"/></linearGradient><linearGradient id="b3"><stop offset="0" stop-color="#cd8286"/><stop offset=".22" stop-color="#af363c"/><stop offset=".55" stop-color="#af363c"/><stop offset="1" stop-color="#421517"/></linearGradient><linearGradient id="b4"><stop offset="0" stop-color="#8cbd8e"/><stop offset=".22" stop-color="#469449"/><stop offset=".55" stop-color="#469449"/><stop offset="1" stop-color="#1b381c"/></linearGradient><linearGradient id="b5"><stop offset="0" stop-color="#8487be"/><stop offset=".22" stop-color="#383d96"/><stop offset=".55" stop-color="#383d96"/><stop offset="1" stop-color="#151739"/></linearGradient><linearGradient id="b6"><stop offset="0" stop-color="#ecc67d"/><stop offset=".22" stop-color="#e0a32e"/><stop offset=".55" stop-color="#e0a32e"/><stop offset="1" stop-color="#553e11"/></linearGradient><linearGradient id="b7"><stop offset="0" stop-color="#c2d589"/><stop offset=".22" stop-color="#9dbc40"/><stop offset=".55" stop-color="#9dbc40"/><stop offset="1" stop-color="#3c4718"/></linearGradient><linearGradient id="b8"><stop offset="0" stop-color="#9b86a4"/><stop offset=".22" stop-color="#5e3c6c"/><stop offset=".55" stop-color="#5e3c6c"/><stop offset="1" stop-color="#241729"/></linearGradient><linearGradient id="b9"><stop offset="0" stop-color="#d9999e"/><stop offset=".22" stop-color="#c15a63"/><stop offset=".55" stop-color="#c15a63"/><stop offset="1" stop-color="#492226"/></linearGradient><linearGradient id="b10"><stop offset="0" stop-color="#9299c8"/><stop offset=".22" stop-color="#505ba6"/><stop offset=".55" stop-color="#505ba6"/><stop offset="1" stop-color="#1e233f"/></linearGradient><linearGradient id="b11"><stop offset="0" stop-color="#e6af7c"/><stop offset=".22" stop-color="#d67e2c"/><stop offset=".55" stop-color="#d67e2c"/><stop offset="1" stop-color="#513011"/></linearGradient><linearGradient id="b12"><stop offset="0" stop-color="#a1d6ca"/><stop offset=".22" stop-color="#67bdaa"/><stop offset=".55" stop-color="#67bdaa"/><stop offset="1" stop-color="#274841"/></linearGradient><linearGradient id="b13"><stop offset="0" stop-color="#b3b0cf"/><stop offset=".22" stop-color="#8580b1"/><stop offset=".55" stop-color="#8580b1"/><stop offset="1" stop-color="#333143"/></linearGradient><linearGradient id="b14"><stop offset="0" stop-color="#97a48a"/><stop offset=".22" stop-color="#576c43"/><stop offset=".55" stop-color="#576c43"/><stop offset="1" stop-color="#212919"/></linearGradient><linearGradient id="b15"><stop offset="0" stop-color="#9eadc2"/><stop offset=".22" stop-color="#627a9d"/><stop offset=".55" stop-color="#627a9d"/><stop offset="1" stop-color="#252e3c"/></linearGradient><linearGradient id="b16"><stop offset="0" stop-color="#d9beb2"/><stop offset=".22" stop-color="#c29682"/><stop offset=".55" stop-color="#c29682"/><stop offset="1" stop-color="#4a3931"/></linearGradient><linearGradient id="b17"><stop offset="0" stop-color="#a8948b"/><stop offset=".22" stop-color="#735244"/><stop offset=".55" stop-color="#735244"/><stop offset="1" stop-color="#2c1f1a"/></linearGradient><linearGradient id="b18"><stop offset="0" stop-color="#8a8a8a"/><stop offset=".22" stop-color="#000000"/><stop offset=".55" stop-color="#000000"/><stop offset="1" stop-color="#000"/></linearGradient><linearGradient id="b19"><stop offset="0" stop-color="#c3c3c3"/><stop offset=".22" stop-color="#9e9e9e"/><stop offset=".55" stop-color="#9e9e9e"/><stop offset="1" stop-color="#3c3c3c"/></linearGradient><linearGradient id="b20"><stop offset="0" stop-color="#d4d4d4"/><stop offset=".22" stop-color="#bababa"/><stop offset=".55" stop-color="#bababa"/><stop offset="1" stop-color="#474747"/></linearGradient><linearGradient id="b21"><stop offset="0" stop-color="#e3e3e3"/><stop offset=".22" stop-color="#d2d2d2"/><stop offset=".55" stop-color="#d2d2d2"/><stop offset="1" stop-color="#505050"/></linearGradient><linearGradient id="b22"><stop offset="0" stop-color="#f0f0f0"/><stop offset=".22" stop-color="#e6e6e6"/><stop offset=".55" stop-color="#e6e6e6"/><stop offset="1" stop-color="#575757"/></linearGradient><linearGradient id="b23"><stop offset="0" stop-color="#fff"/><stop offset=".22" stop-color="#ffffff"/><stop offset=".55" stop-color="#ffffff"/><stop offset="1" stop-color="#616161"/></linearGradient><linearGradient id="tb" x1="0" y1="0" x2="0" y2="1"><stop offset="0" stop-color="#5cb4c9"/><stop offset=".3" stop-color="#0085a3"/><stop offset=".55" stop-color="#0085a3"/><stop offset="1" stop-color="#003447"/></linearGradient><clipPath id="swc"><rect x="413" y="422.8" width="589" height="187"/></clipPath><linearGradient id="th" x1="0" y1="0" x2="0" y2="1"><stop offset="0" stop-color="#323232"/><stop offset=".48" stop-color="#3a3a3a"/><stop offset=".5" stop-color="#1d1d1d"/><stop offset=".85" stop-color="#141414"/><stop offset="1" stop-color="#1c1c1c"/></linearGradient><linearGradient id="rs"><stop offset="0" stop-color="#000" stop-opacity=".55"/><stop offset="1" stop-color="#000" stop-opacity=".12"/></linearGradient></defs>
<text x="22.2" y="83.3" font-size="42" fill="#f2f2f2" textLength="243.2" lengthAdjust="spacingAndGlyphs">ColorChecker</text>
<text x="89" y="140.9" font-size="30.8" fill="#f2f2f2" textLength="240.4" lengthAdjust="spacingAndGlyphs">Avg dE2000: 3,98</text>
<text x="83.9" y="182.9" font-size="30.8" fill="#f2f2f2">Max dE2000: 6,92</text>
<text x="12.5" y="674" font-size="31.4" fill="#f2f2f2" textLength="226.3" lengthAdjust="spacingAndGlyphs">Current Reading</text>
<text x="12.95" y="717" font-size="26.3" fill="#f2f2f2" textLength="106.4" lengthAdjust="spacingAndGlyphs">x: 0,2333</text>
<text x="12.95" y="758.9" font-size="26.3" fill="#f2f2f2" textLength="92.6" lengthAdjust="spacingAndGlyphs">y: 0,279</text>
<text x="12.95" y="800.6" font-size="26.3" fill="#f2f2f2" textLength="115.2" lengthAdjust="spacingAndGlyphs">fL: 20,506</text>
<text x="12.95" y="842.9" font-size="26.3" fill="#f2f2f2" textLength="150.6" lengthAdjust="spacingAndGlyphs">cd/m²: 70,26</text>
<rect x="19.3" y="224.4" width="366" height="369.8" fill="#242424"/>
<text x="202.5" y="219" font-size="15.7" fill="#e4e4e4" text-anchor="middle" textLength="81.3" lengthAdjust="spacingAndGlyphs">DeltaE 2000</text>
<line x1="68.04" y1="224.4" x2="68.04" y2="594.2" stroke="#8c8c8c" stroke-width="1.5"/>
<line x1="116.78" y1="224.4" x2="116.78" y2="594.2" stroke="#8c8c8c" stroke-width="1.5"/>
<line x1="165.52" y1="224.4" x2="165.52" y2="594.2" stroke="#8c8c8c" stroke-width="1.5"/>
<line x1="214.26" y1="224.4" x2="214.26" y2="594.2" stroke="#8c8c8c" stroke-width="1.5"/>
<line x1="311.74" y1="224.4" x2="311.74" y2="594.2" stroke="#8c8c8c" stroke-width="1.5"/>
<line x1="360.48" y1="224.4" x2="360.48" y2="594.2" stroke="#8c8c8c" stroke-width="1.5"/>
<rect x="19.1" y="226" width="106.94" height="10.6" fill="url(#b0)" stroke="#000" stroke-width="1.3"/>
<rect x="19.1" y="242" width="116.93" height="10.6" fill="url(#b1)" stroke="#000" stroke-width="1.3"/>
<rect x="19.1" y="257" width="95.24" height="10.6" fill="url(#b2)" stroke="#000" stroke-width="1.3"/>
<rect x="19.1" y="273" width="90.13" height="10.6" fill="url(#b3)" stroke="#000" stroke-width="1.3"/>
<rect x="19.1" y="288" width="168.84" height="10.6" fill="url(#b4)" stroke="#000" stroke-width="1.3"/>
<rect x="19.1" y="304" width="135.94" height="10.6" fill="url(#b5)" stroke="#000" stroke-width="1.3"/>
<rect x="19.1" y="319" width="63.81" height="10.6" fill="url(#b6)" stroke="#000" stroke-width="1.3"/>
<rect x="19.1" y="334" width="155.68" height="10.6" fill="url(#b7)" stroke="#000" stroke-width="1.3"/>
<rect x="19.1" y="350" width="100.6" height="10.6" fill="url(#b8)" stroke="#000" stroke-width="1.3"/>
<rect x="19.1" y="365" width="86.96" height="10.6" fill="url(#b9)" stroke="#000" stroke-width="1.3"/>
<rect x="19.1" y="381" width="75.99" height="10.6" fill="url(#b10)" stroke="#000" stroke-width="1.3"/>
<rect x="19.1" y="396" width="72.34" height="10.6" fill="url(#b11)" stroke="#000" stroke-width="1.3"/>
<rect x="19.1" y="411" width="151.78" height="10.6" fill="url(#b12)" stroke="#000" stroke-width="1.3"/>
<rect x="19.1" y="427" width="71.36" height="10.6" fill="url(#b13)" stroke="#000" stroke-width="1.3"/>
<rect x="19.1" y="442" width="128.87" height="10.6" fill="url(#b14)" stroke="#000" stroke-width="1.3"/>
<rect x="19.1" y="458" width="62.59" height="10.6" fill="url(#b15)" stroke="#000" stroke-width="1.3"/>
<rect x="19.1" y="473" width="25.54" height="10.6" fill="url(#b16)" stroke="#000" stroke-width="1.3"/>
<rect x="19.1" y="488" width="37.97" height="10.6" fill="url(#b17)" stroke="#000" stroke-width="1.3"/>
<rect x="19.1" y="504" width="41.63" height="10.6" fill="url(#b18)" stroke="#000" stroke-width="1.3"/>
<rect x="19.1" y="519" width="79.4" height="10.6" fill="url(#b19)" stroke="#000" stroke-width="1.3"/>
<rect x="19.1" y="535" width="88.66" height="10.6" fill="url(#b20)" stroke="#000" stroke-width="1.3"/>
<rect x="19.1" y="550" width="95" height="10.6" fill="url(#b21)" stroke="#000" stroke-width="1.3"/>
<rect x="19.1" y="566" width="101.58" height="10.6" fill="url(#b22)" stroke="#000" stroke-width="1.3"/>
<rect x="19.1" y="581" width="122.54" height="10.6" fill="url(#b23)" stroke="#000" stroke-width="1.3"/>
<line x1="43.67" y1="224.4" x2="43.67" y2="594.2" stroke="#008000" stroke-width="1.6"/>
<line x1="92.41" y1="224.4" x2="92.41" y2="594.2" stroke="#ffff00" stroke-width="1.6"/>
<line x1="263" y1="224.4" x2="263" y2="594.2" stroke="#ff0000" stroke-width="1.6"/>
<rect x="19.3" y="224.4" width="366" height="369.8" fill="none" stroke="#9a9a9a" stroke-width="1.6"/>
<line x1="19.3" y1="594.2" x2="19.3" y2="600.7" stroke="#dcdcdc" stroke-width="1.5"/>
<text x="19.3" y="616.8" font-size="15.2" fill="#e4e4e4" text-anchor="middle" textLength="8.03" lengthAdjust="spacingAndGlyphs">0</text>
<line x1="68.04" y1="594.2" x2="68.04" y2="600.7" stroke="#dcdcdc" stroke-width="1.5"/>
<text x="68.04" y="616.8" font-size="15.2" fill="#e4e4e4" text-anchor="middle" textLength="8.03" lengthAdjust="spacingAndGlyphs">2</text>
<line x1="116.78" y1="594.2" x2="116.78" y2="600.7" stroke="#dcdcdc" stroke-width="1.5"/>
<text x="116.78" y="616.8" font-size="15.2" fill="#e4e4e4" text-anchor="middle" textLength="8.03" lengthAdjust="spacingAndGlyphs">4</text>
<line x1="165.52" y1="594.2" x2="165.52" y2="600.7" stroke="#dcdcdc" stroke-width="1.5"/>
<text x="165.52" y="616.8" font-size="15.2" fill="#e4e4e4" text-anchor="middle" textLength="8.03" lengthAdjust="spacingAndGlyphs">6</text>
<line x1="214.26" y1="594.2" x2="214.26" y2="600.7" stroke="#dcdcdc" stroke-width="1.5"/>
<text x="214.26" y="616.8" font-size="15.2" fill="#e4e4e4" text-anchor="middle" textLength="8.03" lengthAdjust="spacingAndGlyphs">8</text>
<line x1="263" y1="594.2" x2="263" y2="600.7" stroke="#dcdcdc" stroke-width="1.5"/>
<text x="263" y="616.8" font-size="15.2" fill="#e4e4e4" text-anchor="middle" textLength="16.06" lengthAdjust="spacingAndGlyphs">10</text>
<line x1="311.74" y1="594.2" x2="311.74" y2="600.7" stroke="#dcdcdc" stroke-width="1.5"/>
<text x="311.74" y="616.8" font-size="15.2" fill="#e4e4e4" text-anchor="middle" textLength="16.06" lengthAdjust="spacingAndGlyphs">12</text>
<line x1="360.48" y1="594.2" x2="360.48" y2="600.7" stroke="#dcdcdc" stroke-width="1.5"/>
<text x="360.48" y="616.8" font-size="15.2" fill="#e4e4e4" text-anchor="middle" textLength="16.06" lengthAdjust="spacingAndGlyphs">14</text>
<rect x="431.6" y="70.1" width="149.7" height="346.8" fill="#242424"/>
<line x1="431.6" y1="113.45" x2="581.3" y2="113.45" stroke="#8c8c8c" stroke-width="1.2"/>
<line x1="431.6" y1="156.8" x2="581.3" y2="156.8" stroke="#8c8c8c" stroke-width="1.2"/>
<line x1="431.6" y1="200.15" x2="581.3" y2="200.15" stroke="#8c8c8c" stroke-width="1.2"/>
<line x1="431.6" y1="243.5" x2="581.3" y2="243.5" stroke="#8c8c8c" stroke-width="1.2"/>
<line x1="431.6" y1="286.85" x2="581.3" y2="286.85" stroke="#8c8c8c" stroke-width="1.2"/>
<line x1="431.6" y1="330.2" x2="581.3" y2="330.2" stroke="#8c8c8c" stroke-width="1.2"/>
<line x1="431.6" y1="373.55" x2="581.3" y2="373.55" stroke="#8c8c8c" stroke-width="1.2"/>
<rect x="446.8" y="233.96" width="119" height="9.54" fill="url(#tb)" stroke="#000" stroke-width="1.6"/>
<line x1="431.6" y1="113.45" x2="581.8" y2="113.45" stroke="#ffff00" stroke-width="1.5"/>
<line x1="431.6" y1="373.55" x2="581.8" y2="373.55" stroke="#ffff00" stroke-width="1.5"/>
<line x1="431.6" y1="200.15" x2="581.8" y2="200.15" stroke="#008000" stroke-width="1.5"/>
<line x1="431.6" y1="286.85" x2="581.8" y2="286.85" stroke="#008000" stroke-width="1.5"/>
<rect x="431.6" y="70.1" width="149.7" height="346.8" fill="none" stroke="#9a9a9a" stroke-width="1.6"/>
<line x1="426.1" y1="70.1" x2="431.6" y2="70.1" stroke="#dcdcdc" stroke-width="1.5"/>
<text x="425.8" y="75.8" font-size="15.2" fill="#e4e4e4" text-anchor="end" textLength="8.03" lengthAdjust="spacingAndGlyphs">4</text>
<line x1="426.1" y1="113.45" x2="431.6" y2="113.45" stroke="#dcdcdc" stroke-width="1.5"/>
<text x="425.8" y="119.15" font-size="15.2" fill="#e4e4e4" text-anchor="end" textLength="8.03" lengthAdjust="spacingAndGlyphs">3</text>
<line x1="426.1" y1="156.8" x2="431.6" y2="156.8" stroke="#dcdcdc" stroke-width="1.5"/>
<text x="425.8" y="162.5" font-size="15.2" fill="#e4e4e4" text-anchor="end" textLength="8.03" lengthAdjust="spacingAndGlyphs">2</text>
<line x1="426.1" y1="200.15" x2="431.6" y2="200.15" stroke="#dcdcdc" stroke-width="1.5"/>
<text x="425.8" y="205.85" font-size="15.2" fill="#e4e4e4" text-anchor="end" textLength="8.03" lengthAdjust="spacingAndGlyphs">1</text>
<line x1="426.1" y1="243.5" x2="431.6" y2="243.5" stroke="#dcdcdc" stroke-width="1.5"/>
<text x="425.8" y="249.2" font-size="15.2" fill="#e4e4e4" text-anchor="end" textLength="8.03" lengthAdjust="spacingAndGlyphs">0</text>
<line x1="426.1" y1="286.85" x2="431.6" y2="286.85" stroke="#dcdcdc" stroke-width="1.5"/>
<text x="425.8" y="292.55" font-size="15.2" fill="#e4e4e4" text-anchor="end" textLength="12.84" lengthAdjust="spacingAndGlyphs">-1</text>
<line x1="426.1" y1="330.2" x2="431.6" y2="330.2" stroke="#dcdcdc" stroke-width="1.5"/>
<text x="425.8" y="335.9" font-size="15.2" fill="#e4e4e4" text-anchor="end" textLength="12.84" lengthAdjust="spacingAndGlyphs">-2</text>
<line x1="426.1" y1="373.55" x2="431.6" y2="373.55" stroke="#dcdcdc" stroke-width="1.5"/>
<text x="425.8" y="379.25" font-size="15.2" fill="#e4e4e4" text-anchor="end" textLength="12.84" lengthAdjust="spacingAndGlyphs">-3</text>
<line x1="426.1" y1="416.9" x2="431.6" y2="416.9" stroke="#dcdcdc" stroke-width="1.5"/>
<text x="425.8" y="422.6" font-size="15.2" fill="#e4e4e4" text-anchor="end" textLength="12.84" lengthAdjust="spacingAndGlyphs">-4</text>
<text x="497.15" y="65.2" font-size="15.7" fill="#e4e4e4" text-anchor="middle" textLength="43.11" lengthAdjust="spacingAndGlyphs">DeltaL</text>
<rect x="627.7" y="70.1" width="150.6" height="346.8" fill="#242424"/>
<line x1="627.7" y1="113.45" x2="778.3" y2="113.45" stroke="#8c8c8c" stroke-width="1.2"/>
<line x1="627.7" y1="156.8" x2="778.3" y2="156.8" stroke="#8c8c8c" stroke-width="1.2"/>
<line x1="627.7" y1="200.15" x2="778.3" y2="200.15" stroke="#8c8c8c" stroke-width="1.2"/>
<line x1="627.7" y1="243.5" x2="778.3" y2="243.5" stroke="#8c8c8c" stroke-width="1.2"/>
<line x1="627.7" y1="286.85" x2="778.3" y2="286.85" stroke="#8c8c8c" stroke-width="1.2"/>
<line x1="627.7" y1="330.2" x2="778.3" y2="330.2" stroke="#8c8c8c" stroke-width="1.2"/>
<line x1="627.7" y1="373.55" x2="778.3" y2="373.55" stroke="#8c8c8c" stroke-width="1.2"/>
<rect x="643.2" y="243.5" width="119.2" height="173.4" fill="url(#tb)" stroke="#000" stroke-width="1.6"/>
<line x1="627.7" y1="178.47" x2="778.8" y2="178.47" stroke="#ffff00" stroke-width="1.5"/>
<line x1="627.7" y1="308.52" x2="778.8" y2="308.52" stroke="#ffff00" stroke-width="1.5"/>
<line x1="627.7" y1="221.82" x2="778.8" y2="221.82" stroke="#008000" stroke-width="1.5"/>
<line x1="627.7" y1="265.17" x2="778.8" y2="265.17" stroke="#008000" stroke-width="1.5"/>
<rect x="627.7" y="70.1" width="150.6" height="346.8" fill="none" stroke="#9a9a9a" stroke-width="1.6"/>
<line x1="622.2" y1="70.1" x2="627.7" y2="70.1" stroke="#dcdcdc" stroke-width="1.5"/>
<text x="621.9" y="75.8" font-size="15.2" fill="#e4e4e4" text-anchor="end" textLength="8.03" lengthAdjust="spacingAndGlyphs">8</text>
<line x1="622.2" y1="113.45" x2="627.7" y2="113.45" stroke="#dcdcdc" stroke-width="1.5"/>
<text x="621.9" y="119.15" font-size="15.2" fill="#e4e4e4" text-anchor="end" textLength="8.03" lengthAdjust="spacingAndGlyphs">6</text>
<line x1="622.2" y1="156.8" x2="627.7" y2="156.8" stroke="#dcdcdc" stroke-width="1.5"/>
<text x="621.9" y="162.5" font-size="15.2" fill="#e4e4e4" text-anchor="end" textLength="8.03" lengthAdjust="spacingAndGlyphs">4</text>
<line x1="622.2" y1="200.15" x2="627.7" y2="200.15" stroke="#dcdcdc" stroke-width="1.5"/>
<text x="621.9" y="205.85" font-size="15.2" fill="#e4e4e4" text-anchor="end" textLength="8.03" lengthAdjust="spacingAndGlyphs">2</text>
<line x1="622.2" y1="243.5" x2="627.7" y2="243.5" stroke="#dcdcdc" stroke-width="1.5"/>
<text x="621.9" y="249.2" font-size="15.2" fill="#e4e4e4" text-anchor="end" textLength="8.03" lengthAdjust="spacingAndGlyphs">0</text>
<line x1="622.2" y1="286.85" x2="627.7" y2="286.85" stroke="#dcdcdc" stroke-width="1.5"/>
<text x="621.9" y="292.55" font-size="15.2" fill="#e4e4e4" text-anchor="end" textLength="12.84" lengthAdjust="spacingAndGlyphs">-2</text>
<line x1="622.2" y1="330.2" x2="627.7" y2="330.2" stroke="#dcdcdc" stroke-width="1.5"/>
<text x="621.9" y="335.9" font-size="15.2" fill="#e4e4e4" text-anchor="end" textLength="12.84" lengthAdjust="spacingAndGlyphs">-4</text>
<line x1="622.2" y1="373.55" x2="627.7" y2="373.55" stroke="#dcdcdc" stroke-width="1.5"/>
<text x="621.9" y="379.25" font-size="15.2" fill="#e4e4e4" text-anchor="end" textLength="12.84" lengthAdjust="spacingAndGlyphs">-6</text>
<line x1="622.2" y1="416.9" x2="627.7" y2="416.9" stroke="#dcdcdc" stroke-width="1.5"/>
<text x="621.9" y="422.6" font-size="15.2" fill="#e4e4e4" text-anchor="end" textLength="12.84" lengthAdjust="spacingAndGlyphs">-8</text>
<text x="693.7" y="65.2" font-size="15.7" fill="#e4e4e4" text-anchor="middle" textLength="45.59" lengthAdjust="spacingAndGlyphs">DeltaC</text>
<rect x="823.8" y="70.1" width="164.7" height="346.8" fill="#242424"/>
<line x1="823.8" y1="113.45" x2="988.5" y2="113.45" stroke="#8c8c8c" stroke-width="1.2"/>
<line x1="823.8" y1="156.8" x2="988.5" y2="156.8" stroke="#8c8c8c" stroke-width="1.2"/>
<line x1="823.8" y1="200.15" x2="988.5" y2="200.15" stroke="#8c8c8c" stroke-width="1.2"/>
<line x1="823.8" y1="243.5" x2="988.5" y2="243.5" stroke="#8c8c8c" stroke-width="1.2"/>
<line x1="823.8" y1="286.85" x2="988.5" y2="286.85" stroke="#8c8c8c" stroke-width="1.2"/>
<line x1="823.8" y1="330.2" x2="988.5" y2="330.2" stroke="#8c8c8c" stroke-width="1.2"/>
<line x1="823.8" y1="373.55" x2="988.5" y2="373.55" stroke="#8c8c8c" stroke-width="1.2"/>
<rect x="841" y="103.26" width="130.3" height="140.24" fill="url(#tb)" stroke="#000" stroke-width="1.6"/>
<line x1="823.8" y1="113.45" x2="989" y2="113.45" stroke="#ffff00" stroke-width="1.5"/>
<line x1="823.8" y1="373.55" x2="989" y2="373.55" stroke="#ffff00" stroke-width="1.5"/>
<line x1="823.8" y1="200.15" x2="989" y2="200.15" stroke="#008000" stroke-width="1.5"/>
<line x1="823.8" y1="286.85" x2="989" y2="286.85" stroke="#008000" stroke-width="1.5"/>
<rect x="823.8" y="70.1" width="164.7" height="346.8" fill="none" stroke="#9a9a9a" stroke-width="1.6"/>
<line x1="818.3" y1="70.1" x2="823.8" y2="70.1" stroke="#dcdcdc" stroke-width="1.5"/>
<text x="818" y="75.8" font-size="15.2" fill="#e4e4e4" text-anchor="end" textLength="8.03" lengthAdjust="spacingAndGlyphs">4</text>
<line x1="818.3" y1="113.45" x2="823.8" y2="113.45" stroke="#dcdcdc" stroke-width="1.5"/>
<text x="818" y="119.15" font-size="15.2" fill="#e4e4e4" text-anchor="end" textLength="8.03" lengthAdjust="spacingAndGlyphs">3</text>
<line x1="818.3" y1="156.8" x2="823.8" y2="156.8" stroke="#dcdcdc" stroke-width="1.5"/>
<text x="818" y="162.5" font-size="15.2" fill="#e4e4e4" text-anchor="end" textLength="8.03" lengthAdjust="spacingAndGlyphs">2</text>
<line x1="818.3" y1="200.15" x2="823.8" y2="200.15" stroke="#dcdcdc" stroke-width="1.5"/>
<text x="818" y="205.85" font-size="15.2" fill="#e4e4e4" text-anchor="end" textLength="8.03" lengthAdjust="spacingAndGlyphs">1</text>
<line x1="818.3" y1="243.5" x2="823.8" y2="243.5" stroke="#dcdcdc" stroke-width="1.5"/>
<text x="818" y="249.2" font-size="15.2" fill="#e4e4e4" text-anchor="end" textLength="8.03" lengthAdjust="spacingAndGlyphs">0</text>
<line x1="818.3" y1="286.85" x2="823.8" y2="286.85" stroke="#dcdcdc" stroke-width="1.5"/>
<text x="818" y="292.55" font-size="15.2" fill="#e4e4e4" text-anchor="end" textLength="12.84" lengthAdjust="spacingAndGlyphs">-1</text>
<line x1="818.3" y1="330.2" x2="823.8" y2="330.2" stroke="#dcdcdc" stroke-width="1.5"/>
<text x="818" y="335.9" font-size="15.2" fill="#e4e4e4" text-anchor="end" textLength="12.84" lengthAdjust="spacingAndGlyphs">-2</text>
<line x1="818.3" y1="373.55" x2="823.8" y2="373.55" stroke="#dcdcdc" stroke-width="1.5"/>
<text x="818" y="379.25" font-size="15.2" fill="#e4e4e4" text-anchor="end" textLength="12.84" lengthAdjust="spacingAndGlyphs">-3</text>
<line x1="818.3" y1="416.9" x2="823.8" y2="416.9" stroke="#dcdcdc" stroke-width="1.5"/>
<text x="818" y="422.6" font-size="15.2" fill="#e4e4e4" text-anchor="end" textLength="12.84" lengthAdjust="spacingAndGlyphs">-4</text>
<text x="896.85" y="65.2" font-size="15.7" fill="#e4e4e4" text-anchor="middle" textLength="45.59" lengthAdjust="spacingAndGlyphs">DeltaH</text>
<rect x="413" y="422.8" width="589" height="204" fill="#000"/>
<g clip-path="url(#swc)">
<rect x="431.5" y="431.5" width="59" height="61" fill="#fff6f9" stroke="#fff" stroke-width="1"/>
<rect x="432.5" y="432.5" width="57" height="59" fill="none" stroke="rgba(120,115,115,.38)" stroke-width="1"/>
<rect x="431.5" y="510.5" width="59" height="61" fill="#f9f9f9" stroke="#fff" stroke-width="1"/>
<rect x="432.5" y="511.5" width="57" height="59" fill="none" stroke="rgba(120,115,115,.38)" stroke-width="1"/>
<text x="461.2" y="587.3" font-size="13" fill="#fff" text-anchor="middle" textLength="32.23" lengthAdjust="spacingAndGlyphs">White</text>
<rect x="501.5" y="431.5" width="59" height="61" fill="#ede4e2" stroke="#fff" stroke-width="1"/>
<rect x="502.5" y="432.5" width="57" height="59" fill="none" stroke="rgba(120,115,115,.38)" stroke-width="1"/>
<rect x="501.5" y="510.5" width="59" height="61" fill="#e6e6e6" stroke="#fff" stroke-width="1"/>
<rect x="502.5" y="511.5" width="57" height="59" fill="none" stroke="rgba(120,115,115,.38)" stroke-width="1"/>
<text x="531.2" y="587.3" font-size="13" fill="#fff" text-anchor="middle" textLength="44.85" lengthAdjust="spacingAndGlyphs">Gray 80</text>
<rect x="571.5" y="431.5" width="59" height="61" fill="#d8cfcd" stroke="#fff" stroke-width="1"/>
<rect x="572.5" y="432.5" width="57" height="59" fill="none" stroke="rgba(120,115,115,.38)" stroke-width="1"/>
<rect x="571.5" y="510.5" width="59" height="61" fill="#d1d1d1" stroke="#fff" stroke-width="1"/>
<rect x="572.5" y="511.5" width="57" height="59" fill="none" stroke="rgba(120,115,115,.38)" stroke-width="1"/>
<text x="601.2" y="587.3" font-size="13" fill="#fff" text-anchor="middle" textLength="44.85" lengthAdjust="spacingAndGlyphs">Gray 65</text>
<rect x="641.5" y="431.5" width="59" height="61" fill="#c2b9b7" stroke="#fff" stroke-width="1"/>
<rect x="642.5" y="432.5" width="57" height="59" fill="none" stroke="rgba(120,115,115,.38)" stroke-width="1"/>
<rect x="641.5" y="510.5" width="59" height="61" fill="#b9b9b9" stroke="#fff" stroke-width="1"/>
<rect x="642.5" y="511.5" width="57" height="59" fill="none" stroke="rgba(120,115,115,.38)" stroke-width="1"/>
<text x="671.2" y="587.3" font-size="13" fill="#fff" text-anchor="middle" textLength="44.85" lengthAdjust="spacingAndGlyphs">Gray 50</text>
<rect x="711.5" y="431.5" width="59" height="61" fill="#a79e9c" stroke="#fff" stroke-width="1"/>
<rect x="712.5" y="432.5" width="57" height="59" fill="none" stroke="rgba(120,115,115,.38)" stroke-width="1"/>
<rect x="711.5" y="510.5" width="59" height="61" fill="#9e9e9e" stroke="#fff" stroke-width="1"/>
<rect x="712.5" y="511.5" width="57" height="59" fill="none" stroke="rgba(120,115,115,.38)" stroke-width="1"/>
<text x="741.2" y="587.3" font-size="13" fill="#fff" text-anchor="middle" textLength="44.85" lengthAdjust="spacingAndGlyphs">Gray 35</text>
<rect x="781.5" y="431.5" width="59" height="61" fill="#08060a" stroke="#fff" stroke-width="1"/>
<rect x="782.5" y="432.5" width="57" height="59" fill="none" stroke="rgba(120,115,115,.38)" stroke-width="1"/>
<rect x="781.5" y="510.5" width="59" height="61" fill="#000000" stroke="#fff" stroke-width="1"/>
<rect x="782.5" y="511.5" width="57" height="59" fill="none" stroke="rgba(120,115,115,.38)" stroke-width="1"/>
<text x="811.2" y="587.3" font-size="13" fill="#fff" text-anchor="middle" textLength="30.84" lengthAdjust="spacingAndGlyphs">Black</text>
<rect x="851.5" y="431.5" width="59" height="61" fill="#6f4f43" stroke="#fff" stroke-width="1"/>
<rect x="852.5" y="432.5" width="57" height="59" fill="none" stroke="rgba(120,115,115,.38)" stroke-width="1"/>
<rect x="851.5" y="510.5" width="59" height="61" fill="#765546" stroke="#fff" stroke-width="1"/>
<rect x="852.5" y="511.5" width="57" height="59" fill="none" stroke="rgba(120,115,115,.38)" stroke-width="1"/>
<text x="881.2" y="587.3" font-size="13" fill="#fff" text-anchor="middle" textLength="54.66" lengthAdjust="spacingAndGlyphs">Dark Skin</text>
<rect x="921.5" y="431.5" width="59" height="61" fill="#c09482" stroke="#fff" stroke-width="1"/>
<rect x="922.5" y="432.5" width="57" height="59" fill="none" stroke="rgba(120,115,115,.38)" stroke-width="1"/>
<rect x="921.5" y="510.5" width="59" height="61" fill="#c59884" stroke="#fff" stroke-width="1"/>
<rect x="922.5" y="511.5" width="57" height="59" fill="none" stroke="rgba(120,115,115,.38)" stroke-width="1"/>
<text x="951.2" y="587.3" font-size="13" fill="#fff" text-anchor="middle" textLength="55.38" lengthAdjust="spacingAndGlyphs">Light Skin</text>
<rect x="991.5" y="431.5" width="59" height="61" fill="#6b7d9c" stroke="#fff" stroke-width="1"/>
<rect x="992.5" y="432.5" width="57" height="59" fill="none" stroke="rgba(120,115,115,.38)" stroke-width="1"/>
<rect x="991.5" y="510.5" width="59" height="61" fill="#627a9d" stroke="#fff" stroke-width="1"/>
<rect x="992.5" y="511.5" width="57" height="59" fill="none" stroke="rgba(120,115,115,.38)" stroke-width="1"/>
<text x="1021.2" y="587.3" font-size="13" fill="#fff" text-anchor="middle" textLength="49.76" lengthAdjust="spacingAndGlyphs">Blue Sky</text>
</g>
<text transform="translate(425.4,462) rotate(-90)" font-size="13" fill="#fff" text-anchor="middle">Actual</text>
<text transform="translate(425.4,541) rotate(-90)" font-size="13" fill="#fff" text-anchor="middle">Target</text>
<rect x="413" y="610.1" width="589" height="16.5" fill="#636363"/>
<rect x="414.2" y="611.3" width="13.6" height="13.6" fill="#868686" stroke="#9c9c9c" stroke-width="1" rx="3"/>
<path d="M418 618.2L424 613.3V623.1Z" fill="#3a3a3a"/>
<rect x="986.5" y="611.3" width="13.6" height="13.6" fill="#868686" stroke="#9c9c9c" stroke-width="1" rx="3"/>
<path d="M996.5 618.2L990.5 613.3V623.1Z" fill="#3a3a3a"/>
<rect x="431.3" y="611.3" width="189.2" height="14.2" fill="#454545" rx="7.1"/>
<rect x="329" y="628" width="1064" height="29.2" fill="url(#th)"/>
<rect x="329" y="628" width="9" height="29.2" fill="#000"/>
<rect x="329" y="657.2" width="1064" height="26.85" fill="#3e3e3e"/>
<rect x="329" y="657.2" width="9" height="26.85" fill="url(#rs)"/>
<rect x="329" y="683.75" width="1064" height="26.85" fill="#808080"/>
<rect x="329" y="683.75" width="9" height="26.85" fill="url(#rs)"/>
<rect x="329" y="710.3" width="1064" height="26.85" fill="#3e3e3e"/>
<rect x="329" y="710.3" width="9" height="26.85" fill="url(#rs)"/>
<rect x="329" y="736.85" width="1064" height="26.85" fill="#808080"/>
<rect x="329" y="736.85" width="9" height="26.85" fill="url(#rs)"/>
<rect x="329" y="763.4" width="1064" height="26.85" fill="#3e3e3e"/>
<rect x="329" y="763.4" width="9" height="26.85" fill="url(#rs)"/>
<rect x="329" y="789.95" width="1064" height="26.85" fill="#808080"/>
<rect x="329" y="789.95" width="9" height="26.85" fill="url(#rs)"/>
<rect x="329" y="816.5" width="1064" height="26.85" fill="#3e3e3e"/>
<rect x="329" y="816.5" width="9" height="26.85" fill="url(#rs)"/>
<text x="408.6" y="648.2" font-size="16" fill="#f4f4f4" textLength="24.6" lengthAdjust="spacingAndGlyphs">White</text>
<text x="443.7" y="648.2" font-size="16" fill="#f4f4f4" textLength="31.2" lengthAdjust="spacingAndGlyphs">Gray 80</text>
<text x="480.3" y="648.2" font-size="16" fill="#f4f4f4" textLength="31.2" lengthAdjust="spacingAndGlyphs">Gray 65</text>
<text x="516.8" y="648.2" font-size="16" fill="#f4f4f4" textLength="31.2" lengthAdjust="spacingAndGlyphs">Gray 50</text>
<text x="553.3" y="648.2" font-size="16" fill="#f4f4f4" textLength="31.2" lengthAdjust="spacingAndGlyphs">Gray 35</text>
<text x="589.8" y="648.2" font-size="16" fill="#f4f4f4" textLength="21.4" lengthAdjust="spacingAndGlyphs">Black</text>
<text x="616.3" y="648.2" font-size="16" fill="#f4f4f4" textLength="37.8" lengthAdjust="spacingAndGlyphs">Dark Skin</text>
<text x="659.7" y="648.2" font-size="16" fill="#f4f4f4" textLength="38.4" lengthAdjust="spacingAndGlyphs">Light Skin</text>
<text x="703.5" y="648.2" font-size="16" fill="#f4f4f4" textLength="34.3" lengthAdjust="spacingAndGlyphs">Blue Sky</text>
<text x="742.9" y="648.2" font-size="16" fill="#f4f4f4" textLength="29" lengthAdjust="spacingAndGlyphs">Foliage</text>
<text x="776.9" y="648.2" font-size="16" fill="#f4f4f4" textLength="48.2" lengthAdjust="spacingAndGlyphs">Blue Flower</text>
<text x="830.4" y="648.2" font-size="16" fill="#f4f4f4" textLength="51.6" lengthAdjust="spacingAndGlyphs">Bluish Green</text>
<text x="887.4" y="648.2" font-size="16" fill="#f4f4f4" textLength="29.9" lengthAdjust="spacingAndGlyphs">Orange</text>
<text x="922.7" y="648.2" font-size="16" fill="#f4f4f4" textLength="53.8" lengthAdjust="spacingAndGlyphs">Purplish Blue</text>
<text x="981.5" y="648.2" font-size="16" fill="#f4f4f4" textLength="58.6" lengthAdjust="spacingAndGlyphs">Moderate Red</text>
<text x="1045.1" y="648.2" font-size="16" fill="#f4f4f4" textLength="26.4" lengthAdjust="spacingAndGlyphs">Purple</text>
<text x="1076.6" y="648.2" font-size="16" fill="#f4f4f4" textLength="53.5" lengthAdjust="spacingAndGlyphs">Yellow Green</text>
<text x="1135.8" y="648.2" font-size="16" fill="#f4f4f4" textLength="58.2" lengthAdjust="spacingAndGlyphs">Orange Yellow</text>
<text x="1199.1" y="648.2" font-size="16" fill="#f4f4f4" textLength="18.3" lengthAdjust="spacingAndGlyphs">Blue</text>
<text x="1228.7" y="648.2" font-size="16" fill="#f4f4f4" textLength="24.9" lengthAdjust="spacingAndGlyphs">Green</text>
<text x="1258.9" y="648.2" font-size="16" fill="#f4f4f4" textLength="15.4" lengthAdjust="spacingAndGlyphs">Red</text>
<text x="1288.8" y="648.2" font-size="16" fill="#f4f4f4" textLength="26.1" lengthAdjust="spacingAndGlyphs">Yellow</text>
<text x="1324.1" y="648.2" font-size="16" fill="#f4f4f4" textLength="36.2" lengthAdjust="spacingAndGlyphs">Magenta</text>
<text x="1365.7" y="648.2" font-size="16" fill="#f4f4f4" textLength="19.8" lengthAdjust="spacingAndGlyphs">Cyan</text>
<text x="340.4" y="677.2" font-size="16" fill="#f4f4f4" textLength="33.6" lengthAdjust="spacingAndGlyphs">x: CIE31</text>
<text x="408.6" y="677.2" font-size="16" fill="#f4f4f4" textLength="18.56" lengthAdjust="spacingAndGlyphs">0,32</text>
<text x="443.7" y="677.2" font-size="16" fill="#f4f4f4" textLength="18.56" lengthAdjust="spacingAndGlyphs">0,32</text>
<text x="480.3" y="677.2" font-size="16" fill="#f4f4f4" textLength="18.56" lengthAdjust="spacingAndGlyphs">0,32</text>
<text x="516.8" y="677.2" font-size="16" fill="#f4f4f4" textLength="18.56" lengthAdjust="spacingAndGlyphs">0,32</text>
<text x="553.3" y="677.2" font-size="16" fill="#f4f4f4" textLength="18.56" lengthAdjust="spacingAndGlyphs">0,32</text>
<text x="589.8" y="677.2" font-size="16" fill="#f4f4f4" textLength="18.56" lengthAdjust="spacingAndGlyphs">0,31</text>
<text x="616.3" y="677.2" font-size="16" fill="#f4f4f4" textLength="18.56" lengthAdjust="spacingAndGlyphs">0,40</text>
<text x="659.7" y="677.2" font-size="16" fill="#f4f4f4" textLength="18.56" lengthAdjust="spacingAndGlyphs">0,38</text>
<text x="703.5" y="677.2" font-size="16" fill="#f4f4f4" textLength="18.56" lengthAdjust="spacingAndGlyphs">0,26</text>
<text x="742.9" y="677.2" font-size="16" fill="#f4f4f4" textLength="18.56" lengthAdjust="spacingAndGlyphs">0,36</text>
<text x="776.9" y="677.2" font-size="16" fill="#f4f4f4" textLength="18.56" lengthAdjust="spacingAndGlyphs">0,28</text>
<text x="830.4" y="677.2" font-size="16" fill="#f4f4f4" textLength="18.56" lengthAdjust="spacingAndGlyphs">0,29</text>
<text x="887.4" y="677.2" font-size="16" fill="#f4f4f4" textLength="18.56" lengthAdjust="spacingAndGlyphs">0,49</text>
<text x="922.7" y="677.2" font-size="16" fill="#f4f4f4" textLength="18.56" lengthAdjust="spacingAndGlyphs">0,23</text>
<text x="981.5" y="677.2" font-size="16" fill="#f4f4f4" textLength="18.56" lengthAdjust="spacingAndGlyphs">0,43</text>
<text x="1045.1" y="677.2" font-size="16" fill="#f4f4f4" textLength="18.56" lengthAdjust="spacingAndGlyphs">0,29</text>
<text x="1076.6" y="677.2" font-size="16" fill="#f4f4f4" textLength="18.56" lengthAdjust="spacingAndGlyphs">0,40</text>
<text x="1135.8" y="677.2" font-size="16" fill="#f4f4f4" textLength="18.56" lengthAdjust="spacingAndGlyphs">0,47</text>
<text x="1199.1" y="677.2" font-size="16" fill="#f4f4f4" textLength="18.56" lengthAdjust="spacingAndGlyphs">0,20</text>
<text x="1228.7" y="677.2" font-size="16" fill="#f4f4f4" textLength="18.56" lengthAdjust="spacingAndGlyphs">0,34</text>
<text x="1258.9" y="677.2" font-size="16" fill="#f4f4f4" textLength="18.56" lengthAdjust="spacingAndGlyphs">0,49</text>
<text x="1288.8" y="677.2" font-size="16" fill="#f4f4f4" textLength="18.56" lengthAdjust="spacingAndGlyphs">0,45</text>
<text x="1324.1" y="677.2" font-size="16" fill="#f4f4f4" textLength="18.56" lengthAdjust="spacingAndGlyphs">0,35</text>
<text x="1365.7" y="677.2" font-size="16" fill="#f4f4f4" textLength="18.56" lengthAdjust="spacingAndGlyphs">0,23</text>
<text x="340.4" y="703.75" font-size="16" fill="#f4f4f4" textLength="33.6" lengthAdjust="spacingAndGlyphs">y: CIE31</text>
<text x="408.6" y="703.75" font-size="16" fill="#f4f4f4" textLength="18.56" lengthAdjust="spacingAndGlyphs">0,33</text>
<text x="443.7" y="703.75" font-size="16" fill="#f4f4f4" textLength="18.56" lengthAdjust="spacingAndGlyphs">0,33</text>
<text x="480.3" y="703.75" font-size="16" fill="#f4f4f4" textLength="18.56" lengthAdjust="spacingAndGlyphs">0,33</text>
<text x="516.8" y="703.75" font-size="16" fill="#f4f4f4" textLength="18.56" lengthAdjust="spacingAndGlyphs">0,33</text>
<text x="553.3" y="703.75" font-size="16" fill="#f4f4f4" textLength="18.56" lengthAdjust="spacingAndGlyphs">0,33</text>
<text x="589.8" y="703.75" font-size="16" fill="#f4f4f4" textLength="18.56" lengthAdjust="spacingAndGlyphs">0,28</text>
<text x="616.3" y="703.75" font-size="16" fill="#f4f4f4" textLength="18.56" lengthAdjust="spacingAndGlyphs">0,36</text>
<text x="659.7" y="703.75" font-size="16" fill="#f4f4f4" textLength="18.56" lengthAdjust="spacingAndGlyphs">0,36</text>
<text x="703.5" y="703.75" font-size="16" fill="#f4f4f4" textLength="18.56" lengthAdjust="spacingAndGlyphs">0,28</text>
<text x="742.9" y="703.75" font-size="16" fill="#f4f4f4" textLength="18.56" lengthAdjust="spacingAndGlyphs">0,42</text>
<text x="776.9" y="703.75" font-size="16" fill="#f4f4f4" textLength="18.56" lengthAdjust="spacingAndGlyphs">0,27</text>
<text x="830.4" y="703.75" font-size="16" fill="#f4f4f4" textLength="18.56" lengthAdjust="spacingAndGlyphs">0,36</text>
<text x="887.4" y="703.75" font-size="16" fill="#f4f4f4" textLength="18.56" lengthAdjust="spacingAndGlyphs">0,40</text>
<text x="922.7" y="703.75" font-size="16" fill="#f4f4f4" textLength="18.56" lengthAdjust="spacingAndGlyphs">0,22</text>
<text x="981.5" y="703.75" font-size="16" fill="#f4f4f4" textLength="18.56" lengthAdjust="spacingAndGlyphs">0,32</text>
<text x="1045.1" y="703.75" font-size="16" fill="#f4f4f4" textLength="18.56" lengthAdjust="spacingAndGlyphs">0,24</text>
<text x="1076.6" y="703.75" font-size="16" fill="#f4f4f4" textLength="18.56" lengthAdjust="spacingAndGlyphs">0,48</text>
<text x="1135.8" y="703.75" font-size="16" fill="#f4f4f4" textLength="18.56" lengthAdjust="spacingAndGlyphs">0,43</text>
<text x="1199.1" y="703.75" font-size="16" fill="#f4f4f4" textLength="18.56" lengthAdjust="spacingAndGlyphs">0,18</text>
<text x="1228.7" y="703.75" font-size="16" fill="#f4f4f4" textLength="18.56" lengthAdjust="spacingAndGlyphs">0,47</text>
<text x="1258.9" y="703.75" font-size="16" fill="#f4f4f4" textLength="18.56" lengthAdjust="spacingAndGlyphs">0,32</text>
<text x="1288.8" y="703.75" font-size="16" fill="#f4f4f4" textLength="18.56" lengthAdjust="spacingAndGlyphs">0,46</text>
<text x="1324.1" y="703.75" font-size="16" fill="#f4f4f4" textLength="18.56" lengthAdjust="spacingAndGlyphs">0,26</text>
<text x="1365.7" y="703.75" font-size="16" fill="#f4f4f4" textLength="18.56" lengthAdjust="spacingAndGlyphs">0,28</text>
<text x="340.4" y="730.3" font-size="16" fill="#f4f4f4" textLength="5.6" lengthAdjust="spacingAndGlyphs">Y</text>
<text x="408.6" y="730.3" font-size="16" fill="#f4f4f4" textLength="29.16" lengthAdjust="spacingAndGlyphs">357,99</text>
<text x="443.7" y="730.3" font-size="16" fill="#f4f4f4" textLength="29.16" lengthAdjust="spacingAndGlyphs">282,28</text>
<text x="480.3" y="730.3" font-size="16" fill="#f4f4f4" textLength="29.16" lengthAdjust="spacingAndGlyphs">227,90</text>
<text x="516.8" y="730.3" font-size="16" fill="#f4f4f4" textLength="29.16" lengthAdjust="spacingAndGlyphs">175,13</text>
<text x="553.3" y="730.3" font-size="16" fill="#f4f4f4" textLength="29.16" lengthAdjust="spacingAndGlyphs">121,81</text>
<text x="589.8" y="730.3" font-size="16" fill="#f4f4f4" textLength="18.56" lengthAdjust="spacingAndGlyphs">0,47</text>
<text x="616.3" y="730.3" font-size="16" fill="#f4f4f4" textLength="23.86" lengthAdjust="spacingAndGlyphs">33,08</text>
<text x="659.7" y="730.3" font-size="16" fill="#f4f4f4" textLength="29.16" lengthAdjust="spacingAndGlyphs">122,07</text>
<text x="703.5" y="730.3" font-size="16" fill="#f4f4f4" textLength="23.86" lengthAdjust="spacingAndGlyphs">69,20</text>
<text x="742.9" y="730.3" font-size="16" fill="#f4f4f4" textLength="23.86" lengthAdjust="spacingAndGlyphs">41,45</text>
<text x="776.9" y="730.3" font-size="16" fill="#f4f4f4" textLength="23.86" lengthAdjust="spacingAndGlyphs">88,96</text>
<text x="830.4" y="730.3" font-size="16" fill="#f4f4f4" textLength="29.16" lengthAdjust="spacingAndGlyphs">144,20</text>
<text x="887.4" y="730.3" font-size="16" fill="#f4f4f4" textLength="23.86" lengthAdjust="spacingAndGlyphs">95,27</text>
<text x="922.7" y="730.3" font-size="16" fill="#f4f4f4" textLength="23.86" lengthAdjust="spacingAndGlyphs">47,64</text>
<text x="981.5" y="730.3" font-size="16" fill="#f4f4f4" textLength="23.86" lengthAdjust="spacingAndGlyphs">66,45</text>
<text x="1045.1" y="730.3" font-size="16" fill="#f4f4f4" textLength="23.86" lengthAdjust="spacingAndGlyphs">25,20</text>
<text x="1076.6" y="730.3" font-size="16" fill="#f4f4f4" textLength="29.16" lengthAdjust="spacingAndGlyphs">138,00</text>
<text x="1135.8" y="730.3" font-size="16" fill="#f4f4f4" textLength="29.16" lengthAdjust="spacingAndGlyphs">141,50</text>
<text x="1199.1" y="730.3" font-size="16" fill="#f4f4f4" textLength="23.86" lengthAdjust="spacingAndGlyphs">28,30</text>
<text x="1228.7" y="730.3" font-size="16" fill="#f4f4f4" textLength="23.86" lengthAdjust="spacingAndGlyphs">72,82</text>
<text x="1258.9" y="730.3" font-size="16" fill="#f4f4f4" textLength="23.86" lengthAdjust="spacingAndGlyphs">40,55</text>
<text x="1288.8" y="730.3" font-size="16" fill="#f4f4f4" textLength="29.16" lengthAdjust="spacingAndGlyphs">192,88</text>
<text x="1324.1" y="730.3" font-size="16" fill="#f4f4f4" textLength="23.86" lengthAdjust="spacingAndGlyphs">72,09</text>
<text x="1365.7" y="730.3" font-size="16" fill="#f4f4f4" textLength="23.86" lengthAdjust="spacingAndGlyphs">70,26</text>
<text x="340.4" y="756.85" font-size="16" fill="#f4f4f4" textLength="61.4" lengthAdjust="spacingAndGlyphs">Target x:CIE31</text>
<text x="408.6" y="756.85" font-size="16" fill="#f4f4f4" textLength="18.56" lengthAdjust="spacingAndGlyphs">0,31</text>
<text x="443.7" y="756.85" font-size="16" fill="#f4f4f4" textLength="18.56" lengthAdjust="spacingAndGlyphs">0,31</text>
<text x="480.3" y="756.85" font-size="16" fill="#f4f4f4" textLength="18.56" lengthAdjust="spacingAndGlyphs">0,31</text>
<text x="516.8" y="756.85" font-size="16" fill="#f4f4f4" textLength="18.56" lengthAdjust="spacingAndGlyphs">0,31</text>
<text x="553.3" y="756.85" font-size="16" fill="#f4f4f4" textLength="18.56" lengthAdjust="spacingAndGlyphs">0,31</text>
<text x="589.8" y="756.85" font-size="16" fill="#f4f4f4" textLength="18.56" lengthAdjust="spacingAndGlyphs">0,31</text>
<text x="616.3" y="756.85" font-size="16" fill="#f4f4f4" textLength="18.56" lengthAdjust="spacingAndGlyphs">0,40</text>
<text x="659.7" y="756.85" font-size="16" fill="#f4f4f4" textLength="18.56" lengthAdjust="spacingAndGlyphs">0,38</text>
<text x="703.5" y="756.85" font-size="16" fill="#f4f4f4" textLength="18.56" lengthAdjust="spacingAndGlyphs">0,25</text>
<text x="742.9" y="756.85" font-size="16" fill="#f4f4f4" textLength="18.56" lengthAdjust="spacingAndGlyphs">0,34</text>
<text x="776.9" y="756.85" font-size="16" fill="#f4f4f4" textLength="18.56" lengthAdjust="spacingAndGlyphs">0,27</text>
<text x="830.4" y="756.85" font-size="16" fill="#f4f4f4" textLength="18.56" lengthAdjust="spacingAndGlyphs">0,26</text>
<text x="887.4" y="756.85" font-size="16" fill="#f4f4f4" textLength="18.56" lengthAdjust="spacingAndGlyphs">0,51</text>
<text x="922.7" y="756.85" font-size="16" fill="#f4f4f4" textLength="18.56" lengthAdjust="spacingAndGlyphs">0,22</text>
<text x="981.5" y="756.85" font-size="16" fill="#f4f4f4" textLength="18.56" lengthAdjust="spacingAndGlyphs">0,46</text>
<text x="1045.1" y="756.85" font-size="16" fill="#f4f4f4" textLength="18.56" lengthAdjust="spacingAndGlyphs">0,29</text>
<text x="1076.6" y="756.85" font-size="16" fill="#f4f4f4" textLength="18.56" lengthAdjust="spacingAndGlyphs">0,38</text>
<text x="1135.8" y="756.85" font-size="16" fill="#f4f4f4" textLength="18.56" lengthAdjust="spacingAndGlyphs">0,47</text>
<text x="1199.1" y="756.85" font-size="16" fill="#f4f4f4" textLength="18.56" lengthAdjust="spacingAndGlyphs">0,19</text>
<text x="1228.7" y="756.85" font-size="16" fill="#f4f4f4" textLength="18.56" lengthAdjust="spacingAndGlyphs">0,31</text>
<text x="1258.9" y="756.85" font-size="16" fill="#f4f4f4" textLength="18.56" lengthAdjust="spacingAndGlyphs">0,54</text>
<text x="1288.8" y="756.85" font-size="16" fill="#f4f4f4" textLength="18.56" lengthAdjust="spacingAndGlyphs">0,45</text>
<text x="1324.1" y="756.85" font-size="16" fill="#f4f4f4" textLength="18.56" lengthAdjust="spacingAndGlyphs">0,37</text>
<text x="1365.7" y="756.85" font-size="16" fill="#f4f4f4" textLength="18.56" lengthAdjust="spacingAndGlyphs">0,21</text>
<text x="340.4" y="783.4" font-size="16" fill="#f4f4f4" textLength="61.4" lengthAdjust="spacingAndGlyphs">Target y:CIE31</text>
<text x="408.6" y="783.4" font-size="16" fill="#f4f4f4" textLength="18.56" lengthAdjust="spacingAndGlyphs">0,33</text>
<text x="443.7" y="783.4" font-size="16" fill="#f4f4f4" textLength="18.56" lengthAdjust="spacingAndGlyphs">0,33</text>
<text x="480.3" y="783.4" font-size="16" fill="#f4f4f4" textLength="18.56" lengthAdjust="spacingAndGlyphs">0,33</text>
<text x="516.8" y="783.4" font-size="16" fill="#f4f4f4" textLength="18.56" lengthAdjust="spacingAndGlyphs">0,33</text>
<text x="553.3" y="783.4" font-size="16" fill="#f4f4f4" textLength="18.56" lengthAdjust="spacingAndGlyphs">0,33</text>
<text x="589.8" y="783.4" font-size="16" fill="#f4f4f4" textLength="18.56" lengthAdjust="spacingAndGlyphs">0,33</text>
<text x="616.3" y="783.4" font-size="16" fill="#f4f4f4" textLength="18.56" lengthAdjust="spacingAndGlyphs">0,36</text>
<text x="659.7" y="783.4" font-size="16" fill="#f4f4f4" textLength="18.56" lengthAdjust="spacingAndGlyphs">0,36</text>
<text x="703.5" y="783.4" font-size="16" fill="#f4f4f4" textLength="18.56" lengthAdjust="spacingAndGlyphs">0,27</text>
<text x="742.9" y="783.4" font-size="16" fill="#f4f4f4" textLength="18.56" lengthAdjust="spacingAndGlyphs">0,43</text>
<text x="776.9" y="783.4" font-size="16" fill="#f4f4f4" textLength="18.56" lengthAdjust="spacingAndGlyphs">0,25</text>
<text x="830.4" y="783.4" font-size="16" fill="#f4f4f4" textLength="18.56" lengthAdjust="spacingAndGlyphs">0,36</text>
<text x="887.4" y="783.4" font-size="16" fill="#f4f4f4" textLength="18.56" lengthAdjust="spacingAndGlyphs">0,41</text>
<text x="922.7" y="783.4" font-size="16" fill="#f4f4f4" textLength="18.56" lengthAdjust="spacingAndGlyphs">0,19</text>
<text x="981.5" y="783.4" font-size="16" fill="#f4f4f4" textLength="18.56" lengthAdjust="spacingAndGlyphs">0,31</text>
<text x="1045.1" y="783.4" font-size="16" fill="#f4f4f4" textLength="18.56" lengthAdjust="spacingAndGlyphs">0,22</text>
<text x="1076.6" y="783.4" font-size="16" fill="#f4f4f4" textLength="18.56" lengthAdjust="spacingAndGlyphs">0,49</text>
<text x="1135.8" y="783.4" font-size="16" fill="#f4f4f4" textLength="18.56" lengthAdjust="spacingAndGlyphs">0,44</text>
<text x="1199.1" y="783.4" font-size="16" fill="#f4f4f4" textLength="18.56" lengthAdjust="spacingAndGlyphs">0,14</text>
<text x="1228.7" y="783.4" font-size="16" fill="#f4f4f4" textLength="18.56" lengthAdjust="spacingAndGlyphs">0,49</text>
<text x="1258.9" y="783.4" font-size="16" fill="#f4f4f4" textLength="18.56" lengthAdjust="spacingAndGlyphs">0,32</text>
<text x="1288.8" y="783.4" font-size="16" fill="#f4f4f4" textLength="18.56" lengthAdjust="spacingAndGlyphs">0,47</text>
<text x="1324.1" y="783.4" font-size="16" fill="#f4f4f4" textLength="18.56" lengthAdjust="spacingAndGlyphs">0,25</text>
<text x="1365.7" y="783.4" font-size="16" fill="#f4f4f4" textLength="18.56" lengthAdjust="spacingAndGlyphs">0,27</text>
<text x="340.4" y="809.95" font-size="16" fill="#f4f4f4" textLength="35.6" lengthAdjust="spacingAndGlyphs">Target Y</text>
<text x="408.6" y="809.95" font-size="16" fill="#f4f4f4" textLength="29.16" lengthAdjust="spacingAndGlyphs">357,99</text>
<text x="443.7" y="809.95" font-size="16" fill="#f4f4f4" textLength="29.16" lengthAdjust="spacingAndGlyphs">283,28</text>
<text x="480.3" y="809.95" font-size="16" fill="#f4f4f4" textLength="29.16" lengthAdjust="spacingAndGlyphs">228,25</text>
<text x="516.8" y="809.95" font-size="16" fill="#f4f4f4" textLength="29.16" lengthAdjust="spacingAndGlyphs">175,78</text>
<text x="553.3" y="809.95" font-size="16" fill="#f4f4f4" textLength="29.16" lengthAdjust="spacingAndGlyphs">122,40</text>
<text x="589.8" y="809.95" font-size="16" fill="#f4f4f4" textLength="18.56" lengthAdjust="spacingAndGlyphs">0,00</text>
<text x="616.3" y="809.95" font-size="16" fill="#f4f4f4" textLength="23.86" lengthAdjust="spacingAndGlyphs">36,06</text>
<text x="659.7" y="809.95" font-size="16" fill="#f4f4f4" textLength="29.16" lengthAdjust="spacingAndGlyphs">124,92</text>
<text x="703.5" y="809.95" font-size="16" fill="#f4f4f4" textLength="23.86" lengthAdjust="spacingAndGlyphs">66,94</text>
<text x="742.9" y="809.95" font-size="16" fill="#f4f4f4" textLength="23.86" lengthAdjust="spacingAndGlyphs">46,65</text>
<text x="776.9" y="809.95" font-size="16" fill="#f4f4f4" textLength="23.86" lengthAdjust="spacingAndGlyphs">83,48</text>
<text x="830.4" y="809.95" font-size="16" fill="#f4f4f4" textLength="29.16" lengthAdjust="spacingAndGlyphs">149,90</text>
<text x="887.4" y="809.95" font-size="16" fill="#f4f4f4" textLength="29.16" lengthAdjust="spacingAndGlyphs">101,48</text>
<text x="922.7" y="809.95" font-size="16" fill="#f4f4f4" textLength="23.86" lengthAdjust="spacingAndGlyphs">42,08</text>
<text x="981.5" y="809.95" font-size="16" fill="#f4f4f4" textLength="23.86" lengthAdjust="spacingAndGlyphs">66,86</text>
<text x="1045.1" y="809.95" font-size="16" fill="#f4f4f4" textLength="23.86" lengthAdjust="spacingAndGlyphs">23,89</text>
<text x="1076.6" y="809.95" font-size="16" fill="#f4f4f4" textLength="29.16" lengthAdjust="spacingAndGlyphs">153,07</text>
<text x="1135.8" y="809.95" font-size="16" fill="#f4f4f4" textLength="29.16" lengthAdjust="spacingAndGlyphs">152,19</text>
<text x="1199.1" y="809.95" font-size="16" fill="#f4f4f4" textLength="23.86" lengthAdjust="spacingAndGlyphs">22,35</text>
<text x="1228.7" y="809.95" font-size="16" fill="#f4f4f4" textLength="23.86" lengthAdjust="spacingAndGlyphs">82,24</text>
<text x="1258.9" y="809.95" font-size="16" fill="#f4f4f4" textLength="23.86" lengthAdjust="spacingAndGlyphs">41,75</text>
<text x="1288.8" y="809.95" font-size="16" fill="#f4f4f4" textLength="28.46" lengthAdjust="spacingAndGlyphs">211,08</text>
<text x="1324.1" y="809.95" font-size="16" fill="#f4f4f4" textLength="23.86" lengthAdjust="spacingAndGlyphs">67,40</text>
<text x="1365.7" y="809.95" font-size="16" fill="#f4f4f4" textLength="23.86" lengthAdjust="spacingAndGlyphs">69,51</text>
<text x="340.4" y="836.5" font-size="16" fill="#f4f4f4" textLength="36.2" lengthAdjust="spacingAndGlyphs">ΔE 2000</text>
<text x="408.6" y="836.5" font-size="16" fill="#f4f4f4" textLength="18.56" lengthAdjust="spacingAndGlyphs">5,02</text>
<text x="443.7" y="836.5" font-size="16" fill="#f4f4f4" textLength="18.56" lengthAdjust="spacingAndGlyphs">4,16</text>
<text x="480.3" y="836.5" font-size="16" fill="#f4f4f4" textLength="18.56" lengthAdjust="spacingAndGlyphs">3,89</text>
<text x="516.8" y="836.5" font-size="16" fill="#f4f4f4" textLength="18.56" lengthAdjust="spacingAndGlyphs">3,63</text>
<text x="553.3" y="836.5" font-size="16" fill="#f4f4f4" textLength="18.56" lengthAdjust="spacingAndGlyphs">3,25</text>
<text x="589.8" y="836.5" font-size="16" fill="#f4f4f4" textLength="18.56" lengthAdjust="spacingAndGlyphs">1,70</text>
<text x="616.3" y="836.5" font-size="16" fill="#f4f4f4" textLength="18.56" lengthAdjust="spacingAndGlyphs">1,55</text>
<text x="659.7" y="836.5" font-size="16" fill="#f4f4f4" textLength="18.56" lengthAdjust="spacingAndGlyphs">1,04</text>
<text x="703.5" y="836.5" font-size="16" fill="#f4f4f4" textLength="18.56" lengthAdjust="spacingAndGlyphs">2,56</text>
<text x="742.9" y="836.5" font-size="16" fill="#f4f4f4" textLength="18.56" lengthAdjust="spacingAndGlyphs">5,28</text>
<text x="776.9" y="836.5" font-size="16" fill="#f4f4f4" textLength="18.56" lengthAdjust="spacingAndGlyphs">2,92</text>
<text x="830.4" y="836.5" font-size="16" fill="#f4f4f4" textLength="18.56" lengthAdjust="spacingAndGlyphs">6,22</text>
<text x="887.4" y="836.5" font-size="16" fill="#f4f4f4" textLength="18.56" lengthAdjust="spacingAndGlyphs">2,96</text>
<text x="922.7" y="836.5" font-size="16" fill="#f4f4f4" textLength="17.85" lengthAdjust="spacingAndGlyphs">3,11</text>
<text x="981.5" y="836.5" font-size="16" fill="#f4f4f4" textLength="18.56" lengthAdjust="spacingAndGlyphs">3,56</text>
<text x="1045.1" y="836.5" font-size="16" fill="#f4f4f4" textLength="18.56" lengthAdjust="spacingAndGlyphs">4,12</text>
<text x="1076.6" y="836.5" font-size="16" fill="#f4f4f4" textLength="18.56" lengthAdjust="spacingAndGlyphs">6,38</text>
<text x="1135.8" y="836.5" font-size="16" fill="#f4f4f4" textLength="18.56" lengthAdjust="spacingAndGlyphs">2,61</text>
<text x="1199.1" y="836.5" font-size="16" fill="#f4f4f4" textLength="18.56" lengthAdjust="spacingAndGlyphs">5,57</text>
<text x="1228.7" y="836.5" font-size="16" fill="#f4f4f4" textLength="18.56" lengthAdjust="spacingAndGlyphs">6,92</text>
<text x="1258.9" y="836.5" font-size="16" fill="#f4f4f4" textLength="18.56" lengthAdjust="spacingAndGlyphs">3,69</text>
<text x="1288.8" y="836.5" font-size="16" fill="#f4f4f4" textLength="18.56" lengthAdjust="spacingAndGlyphs">3,90</text>
<text x="1324.1" y="836.5" font-size="16" fill="#f4f4f4" textLength="18.56" lengthAdjust="spacingAndGlyphs">4,79</text>
<text x="1365.7" y="836.5" font-size="16" fill="#f4f4f4" textLength="18.56" lengthAdjust="spacingAndGlyphs">4,38</text>
<rect x="1019.5" y="48.4" width="694" height="561" fill="none" stroke="#0085a3" stroke-width="7"/>
<text x="1366.5" y="70.8" font-size="16.2" fill="#e4e4e4" text-anchor="middle" textLength="78.4" lengthAdjust="spacingAndGlyphs">CIE 1931 xy</text>
<line x1="1046.4" y1="576.3" x2="1052.4" y2="576.3" stroke="#e0e0e0" stroke-width="1.5"/>
<text x="1046" y="581.9" font-size="16" fill="#e4e4e4" text-anchor="end" textLength="8.1" lengthAdjust="spacingAndGlyphs">0</text>
<line x1="1053.2" y1="576" x2="1053.2" y2="582" stroke="#e0e0e0" stroke-width="1.5"/>
<text x="1053.2" y="598.4" font-size="16" fill="#e4e4e4" text-anchor="middle" textLength="8.1" lengthAdjust="spacingAndGlyphs">0</text>
<line x1="1046.4" y1="516.88" x2="1052.4" y2="516.88" stroke="#e0e0e0" stroke-width="1.5"/>
<text x="1046" y="522.48" font-size="16" fill="#e4e4e4" text-anchor="end" textLength="20.24" lengthAdjust="spacingAndGlyphs">0,1</text>
<line x1="1130.4" y1="576" x2="1130.4" y2="582" stroke="#e0e0e0" stroke-width="1.5"/>
<text x="1130.4" y="598.4" font-size="16" fill="#e4e4e4" text-anchor="middle" textLength="20.24" lengthAdjust="spacingAndGlyphs">0,1</text>
<line x1="1046.4" y1="457.46" x2="1052.4" y2="457.46" stroke="#e0e0e0" stroke-width="1.5"/>
<text x="1046" y="463.06" font-size="16" fill="#e4e4e4" text-anchor="end" textLength="20.24" lengthAdjust="spacingAndGlyphs">0,2</text>
<line x1="1207.4" y1="576" x2="1207.4" y2="582" stroke="#e0e0e0" stroke-width="1.5"/>
<text x="1207.4" y="598.4" font-size="16" fill="#e4e4e4" text-anchor="middle" textLength="20.24" lengthAdjust="spacingAndGlyphs">0,2</text>
<line x1="1046.4" y1="398.04" x2="1052.4" y2="398.04" stroke="#e0e0e0" stroke-width="1.5"/>
<text x="1046" y="403.64" font-size="16" fill="#e4e4e4" text-anchor="end" textLength="20.24" lengthAdjust="spacingAndGlyphs">0,3</text>
<line x1="1285.9" y1="576" x2="1285.9" y2="582" stroke="#e0e0e0" stroke-width="1.5"/>
<text x="1285.9" y="598.4" font-size="16" fill="#e4e4e4" text-anchor="middle" textLength="20.24" lengthAdjust="spacingAndGlyphs">0,3</text>
<line x1="1046.4" y1="338.62" x2="1052.4" y2="338.62" stroke="#e0e0e0" stroke-width="1.5"/>
<text x="1046" y="344.22" font-size="16" fill="#e4e4e4" text-anchor="end" textLength="20.24" lengthAdjust="spacingAndGlyphs">0,4</text>
<line x1="1363" y1="576" x2="1363" y2="582" stroke="#e0e0e0" stroke-width="1.5"/>
<text x="1363" y="598.4" font-size="16" fill="#e4e4e4" text-anchor="middle" textLength="20.24" lengthAdjust="spacingAndGlyphs">0,4</text>
<line x1="1046.4" y1="279.2" x2="1052.4" y2="279.2" stroke="#e0e0e0" stroke-width="1.5"/>
<text x="1046" y="284.8" font-size="16" fill="#e4e4e4" text-anchor="end" textLength="20.24" lengthAdjust="spacingAndGlyphs">0,5</text>
<line x1="1441.5" y1="576" x2="1441.5" y2="582" stroke="#e0e0e0" stroke-width="1.5"/>
<text x="1441.5" y="598.4" font-size="16" fill="#e4e4e4" text-anchor="middle" textLength="20.24" lengthAdjust="spacingAndGlyphs">0,5</text>
<line x1="1046.4" y1="219.78" x2="1052.4" y2="219.78" stroke="#e0e0e0" stroke-width="1.5"/>
<text x="1046" y="225.38" font-size="16" fill="#e4e4e4" text-anchor="end" textLength="20.24" lengthAdjust="spacingAndGlyphs">0,6</text>
<line x1="1518.5" y1="576" x2="1518.5" y2="582" stroke="#e0e0e0" stroke-width="1.5"/>
<text x="1518.5" y="598.4" font-size="16" fill="#e4e4e4" text-anchor="middle" textLength="20.24" lengthAdjust="spacingAndGlyphs">0,6</text>
<line x1="1046.4" y1="160.36" x2="1052.4" y2="160.36" stroke="#e0e0e0" stroke-width="1.5"/>
<text x="1046" y="165.96" font-size="16" fill="#e4e4e4" text-anchor="end" textLength="20.24" lengthAdjust="spacingAndGlyphs">0,7</text>
<line x1="1597.5" y1="576" x2="1597.5" y2="582" stroke="#e0e0e0" stroke-width="1.5"/>
<text x="1597.5" y="598.4" font-size="16" fill="#e4e4e4" text-anchor="middle" textLength="20.24" lengthAdjust="spacingAndGlyphs">0,7</text>
<line x1="1046.4" y1="100.94" x2="1052.4" y2="100.94" stroke="#e0e0e0" stroke-width="1.5"/>
<text x="1046" y="106.54" font-size="16" fill="#e4e4e4" text-anchor="end" textLength="20.24" lengthAdjust="spacingAndGlyphs">0,8</text>
<line x1="1674.4" y1="576" x2="1674.4" y2="582" stroke="#e0e0e0" stroke-width="1.5"/>
<text x="1674.4" y="598.4" font-size="16" fill="#e4e4e4" text-anchor="middle" textLength="20.24" lengthAdjust="spacingAndGlyphs">0,8</text>
<rect x="1052.4" y="76" width="653.6" height="500" fill="none" stroke="#9a9a9a" stroke-width="1.6"/>
<rect x="1422.6" y="535.9" width="280.1" height="27.6" fill="#333333"/>
<text x="1454.4" y="556.6" font-size="20.6" fill="#f2f2f2" textLength="217" lengthAdjust="spacingAndGlyphs">RGB Triplet: 0, 133, 163</text>
<!--INSETFRAME-->
<rect x="1282.95" y="276.45" width="13.9" height="13.9" fill="none" stroke="#fff" stroke-width="1.5"/>
<rect x="1338.05" y="274.85" width="13.9" height="13.9" fill="none" stroke="#fff" stroke-width="1.5"/>
<rect x="1392.65" y="286.35" width="13.9" height="13.9" fill="none" stroke="#fff" stroke-width="1.5"/>
<rect x="1413.85" y="307.55" width="13.9" height="13.9" fill="none" stroke="#fff" stroke-width="1.5"/>
<rect x="1444.55" y="327.05" width="13.9" height="13.9" fill="none" stroke="#fff" stroke-width="1.5"/>
<rect x="1310.05" y="314.35" width="13.9" height="13.9" fill="none" stroke="#fff" stroke-width="1.5"/>
<rect x="1249.55" y="353.65" width="13.9" height="13.9" fill="none" stroke="#fff" stroke-width="1.5"/>
<rect x="1356.05" y="352.05" width="13.9" height="13.9" fill="none" stroke="#fff" stroke-width="1.5"/>
<rect x="1340.55" y="356.55" width="13.9" height="13.9" fill="none" stroke="#fff" stroke-width="1.5"/>
<rect x="1405.05" y="381.35" width="13.9" height="13.9" fill="none" stroke="#fff" stroke-width="1.5"/>
<rect x="1462.55" y="378.95" width="13.9" height="13.9" fill="none" stroke="#fff" stroke-width="1.5"/>
<rect x="1207.55" y="408.55" width="13.9" height="13.9" fill="none" stroke="#fff" stroke-width="1.5"/>
<rect x="1239.15" y="409.65" width="13.9" height="13.9" fill="none" stroke="#fff" stroke-width="1.5"/>
<rect x="1253.45" y="418.25" width="13.9" height="13.9" fill="none" stroke="#fff" stroke-width="1.5"/>
<rect x="1336.55" y="421.15" width="13.9" height="13.9" fill="none" stroke="#fff" stroke-width="1.5"/>
<rect x="1270.55" y="436.55" width="13.9" height="13.9" fill="none" stroke="#fff" stroke-width="1.5"/>
<rect x="1214.45" y="454.45" width="13.9" height="13.9" fill="none" stroke="#fff" stroke-width="1.5"/>
<rect x="1195.05" y="483.95" width="13.9" height="13.9" fill="none" stroke="#fff" stroke-width="1.5"/>
<rect x="1289.2" y="372.1" width="13.6" height="13.6" fill="none" stroke="#000" stroke-width="2.3"/>
<circle cx="1298.2" cy="381.5" r="4.3" fill="#fff" stroke="#000" stroke-width="1.2"/>
<circle cx="1318.1" cy="292.9" r="4.3" fill="#469449" stroke="#000" stroke-width="1.3"/>
<circle cx="1362.1" cy="292" r="4.3" fill="#9dbc40" stroke="#000" stroke-width="1.3"/>
<circle cx="1401.8" cy="301.9" r="4.3" fill="#e7c71f" stroke="#000" stroke-width="1.3"/>
<circle cx="1414.9" cy="318.2" r="4.3" fill="#e0a32e" stroke="#000" stroke-width="1.3"/>
<circle cx="1433" cy="334.9" r="4.3" fill="#d67e2c" stroke="#000" stroke-width="1.3"/>
<circle cx="1331" cy="327" r="4.3" fill="#576c43" stroke="#000" stroke-width="1.3"/>
<circle cx="1275.9" cy="363.1" r="4.3" fill="#67bdaa" stroke="#000" stroke-width="1.3"/>
<circle cx="1359.9" cy="358.8" r="4.3" fill="#735244" stroke="#000" stroke-width="1.3"/>
<circle cx="1344.7" cy="362.8" r="4.3" fill="#c29682" stroke="#000" stroke-width="1.3"/>
<circle cx="1301.2" cy="378.9" r="4.3" fill="#9e9e9e" stroke="#000" stroke-width="1.3"/>
<circle cx="1387.9" cy="383.8" r="4.3" fill="#c15a63" stroke="#000" stroke-width="1.3"/>
<circle cx="1435.9" cy="382.7" r="4.3" fill="#af363c" stroke="#000" stroke-width="1.3"/>
<circle cx="1234" cy="410" r="4.3" fill="#0085a3" stroke="#000" stroke-width="1.3"/>
<circle cx="1256.5" cy="411" r="4.3" fill="#627a9d" stroke="#000" stroke-width="1.3"/>
<circle cx="1266.1" cy="416.9" r="4.3" fill="#8580b1" stroke="#000" stroke-width="1.3"/>
<circle cx="1293.9" cy="411" r="4.3" fill="#000000" stroke="#000" stroke-width="1.3"/>
<circle cx="1327" cy="417.9" r="4.3" fill="#bb5695" stroke="#000" stroke-width="1.3"/>
<circle cx="1275.1" cy="430.9" r="4.3" fill="#5e3c6c" stroke="#000" stroke-width="1.3"/>
<circle cx="1229.9" cy="445.8" r="4.3" fill="#505ba6" stroke="#000" stroke-width="1.3"/>
<circle cx="1210.1" cy="469.9" r="4.3" fill="#383d96" stroke="#000" stroke-width="1.3"/>
<rect x="1509" y="83" width="191.3" height="147.8" fill="none" stroke="#9a9a9a" stroke-width="1.4"/>
<rect x="1597.2" y="149.4" width="14" height="14" fill="none" stroke="#fff" stroke-width="1.5"/>
<circle cx="1683" cy="134.2" r="4.3" fill="#0085a3" stroke="#000" stroke-width="1.3"/>
</svg>
</body></html>
